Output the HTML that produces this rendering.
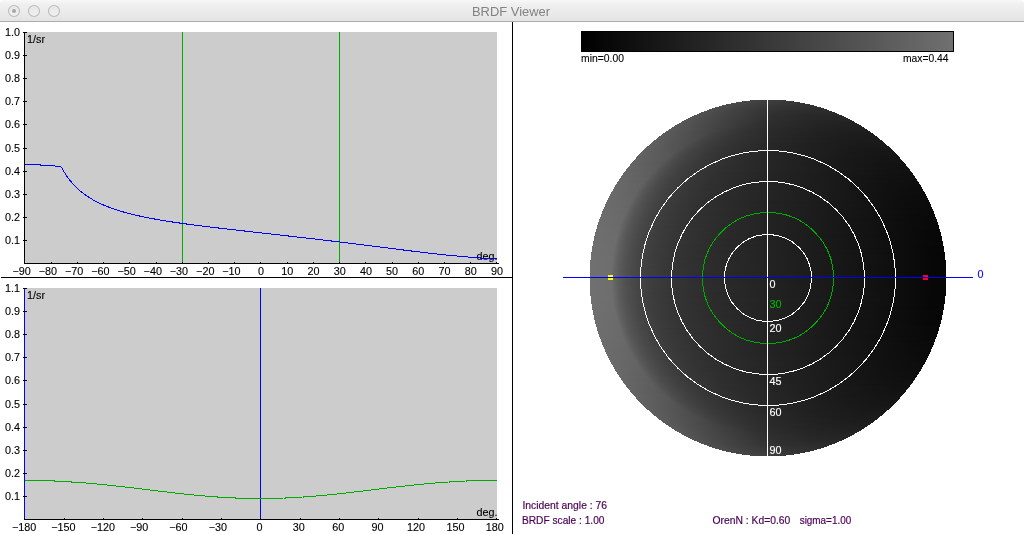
<!DOCTYPE html>
<html><head><meta charset="utf-8"><title>BRDF Viewer</title>
<style>html,body{margin:0;padding:0;background:#fff}body{width:1024px;height:534px;overflow:hidden;position:relative}svg{position:absolute;left:0;top:0;display:block;will-change:transform}text{font-family:"Liberation Sans",sans-serif}</style></head><body>
<svg width="1024" height="534" viewBox="0 0 1024 534">
<defs>
<linearGradient id="tb" x1="0" y1="0" x2="0" y2="1"><stop offset="0" stop-color="#f8f8f8"/><stop offset="0.2" stop-color="#f0f0f0"/><stop offset="1" stop-color="#e4e4e4"/></linearGradient>
<linearGradient id="bt" x1="0" y1="0" x2="0" y2="1"><stop offset="0" stop-color="#e6e6e6"/><stop offset="1" stop-color="#f2f2f2"/></linearGradient>
<linearGradient id="cb" x1="0" y1="0" x2="1" y2="0"><stop offset="0" stop-color="#000"/><stop offset="1" stop-color="#707070"/></linearGradient>
<linearGradient id="g0" gradientUnits="userSpaceOnUse" x1="590" y1="0" x2="946" y2="0"><stop offset="0.4256" stop-color="#484848"/><stop offset="0.4902" stop-color="#3f3f3f"/><stop offset="0.5548" stop-color="#393939"/><stop offset="0.5744" stop-color="#393939"/></linearGradient>
<linearGradient id="g1" gradientUnits="userSpaceOnUse" x1="590" y1="0" x2="946" y2="0"><stop offset="0.3919" stop-color="#4c4c4c"/><stop offset="0.4621" stop-color="#404040"/><stop offset="0.5295" stop-color="#393939"/><stop offset="0.5941" stop-color="#353535"/><stop offset="0.6081" stop-color="#353535"/></linearGradient>
<linearGradient id="g2" gradientUnits="userSpaceOnUse" x1="590" y1="0" x2="946" y2="0"><stop offset="0.3694" stop-color="#4e4e4e"/><stop offset="0.4396" stop-color="#414141"/><stop offset="0.5098" stop-color="#383838"/><stop offset="0.5829" stop-color="#333333"/><stop offset="0.6306" stop-color="#323232"/></linearGradient>
<linearGradient id="g3" gradientUnits="userSpaceOnUse" x1="590" y1="0" x2="946" y2="0"><stop offset="0.3497" stop-color="#505050"/><stop offset="0.4228" stop-color="#424242"/><stop offset="0.5014" stop-color="#373737"/><stop offset="0.5801" stop-color="#313131"/><stop offset="0.6419" stop-color="#303030"/><stop offset="0.6503" stop-color="#303030"/></linearGradient>
<linearGradient id="g4" gradientUnits="userSpaceOnUse" x1="590" y1="0" x2="946" y2="0"><stop offset="0.3329" stop-color="#515151"/><stop offset="0.4059" stop-color="#434343"/><stop offset="0.4958" stop-color="#363636"/><stop offset="0.5744" stop-color="#303030"/><stop offset="0.6419" stop-color="#2d2d2d"/><stop offset="0.6671" stop-color="#2e2e2e"/></linearGradient>
<linearGradient id="g5" gradientUnits="userSpaceOnUse" x1="590" y1="0" x2="946" y2="0"><stop offset="0.316" stop-color="#535353"/><stop offset="0.3862" stop-color="#454545"/><stop offset="0.4874" stop-color="#353535"/><stop offset="0.552" stop-color="#2f2f2f"/><stop offset="0.6334" stop-color="#2c2c2c"/><stop offset="0.684" stop-color="#2c2c2c"/></linearGradient>
<linearGradient id="g6" gradientUnits="userSpaceOnUse" x1="590" y1="0" x2="946" y2="0"><stop offset="0.302" stop-color="#545454"/><stop offset="0.3722" stop-color="#464646"/><stop offset="0.4817" stop-color="#353535"/><stop offset="0.5267" stop-color="#303030"/><stop offset="0.6166" stop-color="#2b2b2b"/><stop offset="0.6812" stop-color="#2a2a2a"/><stop offset="0.698" stop-color="#2a2a2a"/></linearGradient>
<linearGradient id="g7" gradientUnits="userSpaceOnUse" x1="590" y1="0" x2="946" y2="0"><stop offset="0.2907" stop-color="#555555"/><stop offset="0.3638" stop-color="#474747"/><stop offset="0.4817" stop-color="#343434"/><stop offset="0.5211" stop-color="#2f2f2f"/><stop offset="0.6194" stop-color="#292929"/><stop offset="0.6868" stop-color="#282828"/><stop offset="0.7093" stop-color="#292929"/></linearGradient>
<linearGradient id="g8" gradientUnits="userSpaceOnUse" x1="590" y1="0" x2="946" y2="0"><stop offset="0.2795" stop-color="#565656"/><stop offset="0.3553" stop-color="#474747"/><stop offset="0.4846" stop-color="#323232"/><stop offset="0.5239" stop-color="#2e2e2e"/><stop offset="0.625" stop-color="#282828"/><stop offset="0.6952" stop-color="#262626"/><stop offset="0.7205" stop-color="#272727"/></linearGradient>
<linearGradient id="g9" gradientUnits="userSpaceOnUse" x1="590" y1="0" x2="946" y2="0"><stop offset="0.2683" stop-color="#575757"/><stop offset="0.3441" stop-color="#484848"/><stop offset="0.4846" stop-color="#313131"/><stop offset="0.5183" stop-color="#2e2e2e"/><stop offset="0.6278" stop-color="#272727"/><stop offset="0.7008" stop-color="#252525"/><stop offset="0.7317" stop-color="#262626"/></linearGradient>
<linearGradient id="g10" gradientUnits="userSpaceOnUse" x1="590" y1="0" x2="946" y2="0"><stop offset="0.257" stop-color="#585858"/><stop offset="0.3329" stop-color="#494949"/><stop offset="0.4874" stop-color="#303030"/><stop offset="0.5211" stop-color="#2d2d2d"/><stop offset="0.6362" stop-color="#252525"/><stop offset="0.7093" stop-color="#242424"/><stop offset="0.743" stop-color="#252525"/></linearGradient>
<linearGradient id="g11" gradientUnits="userSpaceOnUse" x1="590" y1="0" x2="946" y2="0"><stop offset="0.2458" stop-color="#595959"/><stop offset="0.3188" stop-color="#4b4b4b"/><stop offset="0.4874" stop-color="#2f2f2f"/><stop offset="0.5295" stop-color="#2b2b2b"/><stop offset="0.6475" stop-color="#242424"/><stop offset="0.7205" stop-color="#222222"/><stop offset="0.7542" stop-color="#242424"/></linearGradient>
<linearGradient id="g12" gradientUnits="userSpaceOnUse" x1="590" y1="0" x2="946" y2="0"><stop offset="0.2374" stop-color="#5a5a5a"/><stop offset="0.316" stop-color="#4b4b4b"/><stop offset="0.4649" stop-color="#313131"/><stop offset="0.5126" stop-color="#2c2c2c"/><stop offset="0.639" stop-color="#242424"/><stop offset="0.7205" stop-color="#212121"/><stop offset="0.7626" stop-color="#232323"/></linearGradient>
<linearGradient id="g13" gradientUnits="userSpaceOnUse" x1="590" y1="0" x2="946" y2="0"><stop offset="0.2289" stop-color="#5b5b5b"/><stop offset="0.3104" stop-color="#4b4b4b"/><stop offset="0.389" stop-color="#3e3e3e"/><stop offset="0.4396" stop-color="#343434"/><stop offset="0.507" stop-color="#2c2c2c"/><stop offset="0.639" stop-color="#232323"/><stop offset="0.7233" stop-color="#202020"/><stop offset="0.7711" stop-color="#212121"/></linearGradient>
<linearGradient id="g14" gradientUnits="userSpaceOnUse" x1="590" y1="0" x2="946" y2="0"><stop offset="0.2205" stop-color="#5c5c5c"/><stop offset="0.3048" stop-color="#4c4c4c"/><stop offset="0.3694" stop-color="#404040"/><stop offset="0.4143" stop-color="#373737"/><stop offset="0.4874" stop-color="#2d2d2d"/><stop offset="0.5829" stop-color="#252525"/><stop offset="0.7037" stop-color="#202020"/><stop offset="0.7626" stop-color="#202020"/><stop offset="0.7795" stop-color="#202020"/></linearGradient>
<linearGradient id="g15" gradientUnits="userSpaceOnUse" x1="590" y1="0" x2="946" y2="0"><stop offset="0.2121" stop-color="#5c5c5c"/><stop offset="0.2992" stop-color="#4c4c4c"/><stop offset="0.3497" stop-color="#444444"/><stop offset="0.389" stop-color="#3a3a3a"/><stop offset="0.448" stop-color="#313131"/><stop offset="0.5154" stop-color="#2a2a2a"/><stop offset="0.6559" stop-color="#212121"/><stop offset="0.743" stop-color="#1e1e1e"/><stop offset="0.7879" stop-color="#1f1f1f"/></linearGradient>
<linearGradient id="g16" gradientUnits="userSpaceOnUse" x1="590" y1="0" x2="946" y2="0"><stop offset="0.2037" stop-color="#5d5d5d"/><stop offset="0.2935" stop-color="#4d4d4d"/><stop offset="0.3357" stop-color="#454545"/><stop offset="0.3722" stop-color="#3c3c3c"/><stop offset="0.4256" stop-color="#333333"/><stop offset="0.507" stop-color="#2a2a2a"/><stop offset="0.6531" stop-color="#202020"/><stop offset="0.7458" stop-color="#1d1d1d"/><stop offset="0.7935" stop-color="#1e1e1e"/><stop offset="0.7963" stop-color="#1f1f1f"/></linearGradient>
<linearGradient id="g17" gradientUnits="userSpaceOnUse" x1="590" y1="0" x2="946" y2="0"><stop offset="0.1952" stop-color="#5e5e5e"/><stop offset="0.2851" stop-color="#4e4e4e"/><stop offset="0.3216" stop-color="#484848"/><stop offset="0.3553" stop-color="#3e3e3e"/><stop offset="0.4059" stop-color="#353535"/><stop offset="0.4902" stop-color="#2b2b2b"/><stop offset="0.6278" stop-color="#212121"/><stop offset="0.743" stop-color="#1c1c1c"/><stop offset="0.7963" stop-color="#1d1d1d"/><stop offset="0.8048" stop-color="#1e1e1e"/></linearGradient>
<linearGradient id="g18" gradientUnits="userSpaceOnUse" x1="590" y1="0" x2="946" y2="0"><stop offset="0.1896" stop-color="#5e5e5e"/><stop offset="0.302" stop-color="#4b4b4b"/><stop offset="0.3104" stop-color="#494949"/><stop offset="0.3413" stop-color="#404040"/><stop offset="0.3862" stop-color="#373737"/><stop offset="0.4593" stop-color="#2e2e2e"/><stop offset="0.5379" stop-color="#272727"/><stop offset="0.6896" stop-color="#1e1e1e"/><stop offset="0.7711" stop-color="#1b1b1b"/><stop offset="0.8104" stop-color="#1d1d1d"/></linearGradient>
<linearGradient id="g19" gradientUnits="userSpaceOnUse" x1="590" y1="0" x2="946" y2="0"><stop offset="0.1812" stop-color="#5f5f5f"/><stop offset="0.2963" stop-color="#4c4c4c"/><stop offset="0.3272" stop-color="#424242"/><stop offset="0.3694" stop-color="#393939"/><stop offset="0.434" stop-color="#303030"/><stop offset="0.5239" stop-color="#272727"/><stop offset="0.6868" stop-color="#1d1d1d"/><stop offset="0.7739" stop-color="#1b1b1b"/><stop offset="0.8188" stop-color="#1c1c1c"/></linearGradient>
<linearGradient id="g20" gradientUnits="userSpaceOnUse" x1="590" y1="0" x2="946" y2="0"><stop offset="0.1756" stop-color="#606060"/><stop offset="0.2879" stop-color="#4c4c4c"/><stop offset="0.316" stop-color="#434343"/><stop offset="0.3553" stop-color="#3a3a3a"/><stop offset="0.4171" stop-color="#313131"/><stop offset="0.5154" stop-color="#282828"/><stop offset="0.6868" stop-color="#1d1d1d"/><stop offset="0.7795" stop-color="#1a1a1a"/><stop offset="0.8244" stop-color="#1b1b1b"/></linearGradient>
<linearGradient id="g21" gradientUnits="userSpaceOnUse" x1="590" y1="0" x2="946" y2="0"><stop offset="0.1671" stop-color="#616161"/><stop offset="0.2767" stop-color="#4e4e4e"/><stop offset="0.302" stop-color="#454545"/><stop offset="0.3385" stop-color="#3c3c3c"/><stop offset="0.3947" stop-color="#333333"/><stop offset="0.4874" stop-color="#292929"/><stop offset="0.6559" stop-color="#1e1e1e"/><stop offset="0.7767" stop-color="#191919"/><stop offset="0.8272" stop-color="#1a1a1a"/><stop offset="0.8329" stop-color="#1a1a1a"/></linearGradient>
<linearGradient id="g22" gradientUnits="userSpaceOnUse" x1="590" y1="0" x2="946" y2="0"><stop offset="0.1615" stop-color="#616161"/><stop offset="0.2683" stop-color="#4f4f4f"/><stop offset="0.2935" stop-color="#464646"/><stop offset="0.3301" stop-color="#3d3d3d"/><stop offset="0.3834" stop-color="#343434"/><stop offset="0.4733" stop-color="#2a2a2a"/><stop offset="0.6306" stop-color="#1f1f1f"/><stop offset="0.7654" stop-color="#191919"/><stop offset="0.8216" stop-color="#191919"/><stop offset="0.8385" stop-color="#1a1a1a"/></linearGradient>
<linearGradient id="g23" gradientUnits="userSpaceOnUse" x1="590" y1="0" x2="946" y2="0"><stop offset="0.1559" stop-color="#626262"/><stop offset="0.2598" stop-color="#505050"/><stop offset="0.2851" stop-color="#474747"/><stop offset="0.3188" stop-color="#3e3e3e"/><stop offset="0.3694" stop-color="#353535"/><stop offset="0.4508" stop-color="#2c2c2c"/><stop offset="0.5772" stop-color="#222222"/><stop offset="0.7402" stop-color="#191919"/><stop offset="0.8132" stop-color="#181818"/><stop offset="0.8441" stop-color="#191919"/></linearGradient>
<linearGradient id="g24" gradientUnits="userSpaceOnUse" x1="590" y1="0" x2="946" y2="0"><stop offset="0.1503" stop-color="#626262"/><stop offset="0.2514" stop-color="#525252"/><stop offset="0.2739" stop-color="#484848"/><stop offset="0.3076" stop-color="#3f3f3f"/><stop offset="0.3553" stop-color="#363636"/><stop offset="0.4312" stop-color="#2d2d2d"/><stop offset="0.5548" stop-color="#242424"/><stop offset="0.7374" stop-color="#191919"/><stop offset="0.816" stop-color="#171717"/><stop offset="0.8497" stop-color="#181818"/></linearGradient>
<linearGradient id="g25" gradientUnits="userSpaceOnUse" x1="590" y1="0" x2="946" y2="0"><stop offset="0.1447" stop-color="#636363"/><stop offset="0.243" stop-color="#535353"/><stop offset="0.2654" stop-color="#494949"/><stop offset="0.2963" stop-color="#404040"/><stop offset="0.3413" stop-color="#383838"/><stop offset="0.4115" stop-color="#2f2f2f"/><stop offset="0.5351" stop-color="#252525"/><stop offset="0.7346" stop-color="#191919"/><stop offset="0.8188" stop-color="#161616"/><stop offset="0.8553" stop-color="#171717"/></linearGradient>
<linearGradient id="g26" gradientUnits="userSpaceOnUse" x1="590" y1="0" x2="946" y2="0"><stop offset="0.139" stop-color="#636363"/><stop offset="0.2346" stop-color="#555555"/><stop offset="0.257" stop-color="#4a4a4a"/><stop offset="0.2879" stop-color="#414141"/><stop offset="0.3329" stop-color="#383838"/><stop offset="0.4031" stop-color="#2f2f2f"/><stop offset="0.5267" stop-color="#252525"/><stop offset="0.7374" stop-color="#181818"/><stop offset="0.8244" stop-color="#161616"/><stop offset="0.861" stop-color="#171717"/></linearGradient>
<linearGradient id="g27" gradientUnits="userSpaceOnUse" x1="590" y1="0" x2="946" y2="0"><stop offset="0.1334" stop-color="#646464"/><stop offset="0.2261" stop-color="#565656"/><stop offset="0.2514" stop-color="#4a4a4a"/><stop offset="0.2823" stop-color="#414141"/><stop offset="0.3272" stop-color="#383838"/><stop offset="0.3947" stop-color="#303030"/><stop offset="0.5183" stop-color="#252525"/><stop offset="0.7402" stop-color="#181818"/><stop offset="0.8301" stop-color="#151515"/><stop offset="0.8666" stop-color="#161616"/></linearGradient>
<linearGradient id="g28" gradientUnits="userSpaceOnUse" x1="590" y1="0" x2="946" y2="0"><stop offset="0.1278" stop-color="#646464"/><stop offset="0.2205" stop-color="#575757"/><stop offset="0.2402" stop-color="#4d4d4d"/><stop offset="0.2683" stop-color="#434343"/><stop offset="0.3076" stop-color="#3b3b3b"/><stop offset="0.3666" stop-color="#323232"/><stop offset="0.4677" stop-color="#292929"/><stop offset="0.6952" stop-color="#1a1a1a"/><stop offset="0.8188" stop-color="#151515"/><stop offset="0.8666" stop-color="#151515"/><stop offset="0.8722" stop-color="#161616"/></linearGradient>
<linearGradient id="g29" gradientUnits="userSpaceOnUse" x1="590" y1="0" x2="946" y2="0"><stop offset="0.1222" stop-color="#656565"/><stop offset="0.2121" stop-color="#585858"/><stop offset="0.2374" stop-color="#4c4c4c"/><stop offset="0.2654" stop-color="#434343"/><stop offset="0.3076" stop-color="#3a3a3a"/><stop offset="0.3694" stop-color="#313131"/><stop offset="0.4789" stop-color="#282828"/><stop offset="0.7233" stop-color="#181818"/><stop offset="0.8357" stop-color="#141414"/><stop offset="0.8778" stop-color="#151515"/></linearGradient>
<linearGradient id="g30" gradientUnits="userSpaceOnUse" x1="590" y1="0" x2="946" y2="0"><stop offset="0.1166" stop-color="#656565"/><stop offset="0.2065" stop-color="#595959"/><stop offset="0.2289" stop-color="#4d4d4d"/><stop offset="0.257" stop-color="#444444"/><stop offset="0.2963" stop-color="#3b3b3b"/><stop offset="0.3553" stop-color="#323232"/><stop offset="0.4565" stop-color="#292929"/><stop offset="0.7037" stop-color="#191919"/><stop offset="0.8301" stop-color="#141414"/><stop offset="0.8778" stop-color="#141414"/><stop offset="0.8834" stop-color="#151515"/></linearGradient>
<linearGradient id="g31" gradientUnits="userSpaceOnUse" x1="590" y1="0" x2="946" y2="0"><stop offset="0.1138" stop-color="#656565"/><stop offset="0.2008" stop-color="#595959"/><stop offset="0.2205" stop-color="#4f4f4f"/><stop offset="0.2458" stop-color="#464646"/><stop offset="0.2823" stop-color="#3d3d3d"/><stop offset="0.3357" stop-color="#343434"/><stop offset="0.4228" stop-color="#2c2c2c"/><stop offset="0.6362" stop-color="#1d1d1d"/><stop offset="0.8048" stop-color="#141414"/><stop offset="0.8666" stop-color="#131313"/><stop offset="0.8862" stop-color="#141414"/></linearGradient>
<linearGradient id="g32" gradientUnits="userSpaceOnUse" x1="590" y1="0" x2="946" y2="0"><stop offset="0.1081" stop-color="#666666"/><stop offset="0.1952" stop-color="#5a5a5a"/><stop offset="0.2121" stop-color="#515151"/><stop offset="0.2374" stop-color="#474747"/><stop offset="0.2711" stop-color="#3e3e3e"/><stop offset="0.3216" stop-color="#363636"/><stop offset="0.4031" stop-color="#2d2d2d"/><stop offset="0.5857" stop-color="#202020"/><stop offset="0.7963" stop-color="#141414"/><stop offset="0.8666" stop-color="#121212"/><stop offset="0.8919" stop-color="#131313"/></linearGradient>
<linearGradient id="g33" gradientUnits="userSpaceOnUse" x1="590" y1="0" x2="946" y2="0"><stop offset="0.1025" stop-color="#676767"/><stop offset="0.1896" stop-color="#5b5b5b"/><stop offset="0.2065" stop-color="#515151"/><stop offset="0.2289" stop-color="#484848"/><stop offset="0.2626" stop-color="#3f3f3f"/><stop offset="0.3104" stop-color="#373737"/><stop offset="0.3862" stop-color="#2e2e2e"/><stop offset="0.5435" stop-color="#232323"/><stop offset="0.7935" stop-color="#141414"/><stop offset="0.8694" stop-color="#121212"/><stop offset="0.8975" stop-color="#131313"/></linearGradient>
<linearGradient id="g34" gradientUnits="userSpaceOnUse" x1="590" y1="0" x2="946" y2="0"><stop offset="0.09972" stop-color="#676767"/><stop offset="0.184" stop-color="#5c5c5c"/><stop offset="0.2008" stop-color="#525252"/><stop offset="0.2233" stop-color="#494949"/><stop offset="0.257" stop-color="#3f3f3f"/><stop offset="0.3048" stop-color="#373737"/><stop offset="0.3806" stop-color="#2e2e2e"/><stop offset="0.5351" stop-color="#232323"/><stop offset="0.7992" stop-color="#141414"/><stop offset="0.875" stop-color="#111111"/><stop offset="0.9003" stop-color="#121212"/></linearGradient>
<linearGradient id="g35" gradientUnits="userSpaceOnUse" x1="590" y1="0" x2="946" y2="0"><stop offset="0.0941" stop-color="#676767"/><stop offset="0.1784" stop-color="#5d5d5d"/><stop offset="0.1952" stop-color="#535353"/><stop offset="0.2177" stop-color="#494949"/><stop offset="0.2486" stop-color="#404040"/><stop offset="0.2935" stop-color="#383838"/><stop offset="0.3638" stop-color="#303030"/><stop offset="0.493" stop-color="#262626"/><stop offset="0.7963" stop-color="#131313"/><stop offset="0.8778" stop-color="#111111"/><stop offset="0.9059" stop-color="#121212"/></linearGradient>
<linearGradient id="g36" gradientUnits="userSpaceOnUse" x1="590" y1="0" x2="946" y2="0"><stop offset="0.09129" stop-color="#686868"/><stop offset="0.1728" stop-color="#5e5e5e"/><stop offset="0.1924" stop-color="#525252"/><stop offset="0.2149" stop-color="#494949"/><stop offset="0.2486" stop-color="#3f3f3f"/><stop offset="0.2963" stop-color="#373737"/><stop offset="0.3722" stop-color="#2e2e2e"/><stop offset="0.5239" stop-color="#232323"/><stop offset="0.8104" stop-color="#131313"/><stop offset="0.8834" stop-color="#111111"/><stop offset="0.9087" stop-color="#111111"/></linearGradient>
<linearGradient id="g37" gradientUnits="userSpaceOnUse" x1="590" y1="0" x2="946" y2="0"><stop offset="0.08567" stop-color="#686868"/><stop offset="0.1671" stop-color="#5e5e5e"/><stop offset="0.1896" stop-color="#515151"/><stop offset="0.2121" stop-color="#484848"/><stop offset="0.2458" stop-color="#3f3f3f"/><stop offset="0.2935" stop-color="#373737"/><stop offset="0.3694" stop-color="#2e2e2e"/><stop offset="0.5239" stop-color="#232323"/><stop offset="0.8188" stop-color="#121212"/><stop offset="0.889" stop-color="#101010"/><stop offset="0.9143" stop-color="#111111"/></linearGradient>
<linearGradient id="g38" gradientUnits="userSpaceOnUse" x1="590" y1="0" x2="946" y2="0"><stop offset="0.08287" stop-color="#686868"/><stop offset="0.1615" stop-color="#5f5f5f"/><stop offset="0.1643" stop-color="#5e5e5e"/><stop offset="0.1812" stop-color="#545454"/><stop offset="0.2037" stop-color="#4a4a4a"/><stop offset="0.2346" stop-color="#414141"/><stop offset="0.2795" stop-color="#383838"/><stop offset="0.3497" stop-color="#303030"/><stop offset="0.4761" stop-color="#262626"/><stop offset="0.8188" stop-color="#121212"/><stop offset="0.8947" stop-color="#101010"/><stop offset="0.9171" stop-color="#101010"/></linearGradient>
<linearGradient id="g39" gradientUnits="userSpaceOnUse" x1="590" y1="0" x2="946" y2="0"><stop offset="0.08006" stop-color="#696969"/><stop offset="0.1587" stop-color="#606060"/><stop offset="0.1756" stop-color="#555555"/><stop offset="0.198" stop-color="#4b4b4b"/><stop offset="0.2289" stop-color="#414141"/><stop offset="0.2739" stop-color="#393939"/><stop offset="0.3441" stop-color="#303030"/><stop offset="0.4705" stop-color="#262626"/><stop offset="0.8244" stop-color="#111111"/><stop offset="0.8975" stop-color="#0f0f0f"/><stop offset="0.9199" stop-color="#101010"/></linearGradient>
<linearGradient id="g40" gradientUnits="userSpaceOnUse" x1="590" y1="0" x2="946" y2="0"><stop offset="0.07444" stop-color="#696969"/><stop offset="0.1531" stop-color="#606060"/><stop offset="0.1756" stop-color="#535353"/><stop offset="0.198" stop-color="#494949"/><stop offset="0.2289" stop-color="#404040"/><stop offset="0.2739" stop-color="#383838"/><stop offset="0.3441" stop-color="#303030"/><stop offset="0.4733" stop-color="#262626"/><stop offset="0.8329" stop-color="#111111"/><stop offset="0.9031" stop-color="#0f0f0f"/><stop offset="0.9256" stop-color="#0f0f0f"/></linearGradient>
<linearGradient id="g41" gradientUnits="userSpaceOnUse" x1="590" y1="0" x2="946" y2="0"><stop offset="0.07163" stop-color="#696969"/><stop offset="0.1503" stop-color="#616161"/><stop offset="0.1643" stop-color="#575757"/><stop offset="0.184" stop-color="#4d4d4d"/><stop offset="0.2121" stop-color="#444444"/><stop offset="0.2514" stop-color="#3b3b3b"/><stop offset="0.3104" stop-color="#333333"/><stop offset="0.4115" stop-color="#2a2a2a"/><stop offset="0.8272" stop-color="#111111"/><stop offset="0.9059" stop-color="#0e0e0e"/><stop offset="0.9284" stop-color="#0f0f0f"/></linearGradient>
<linearGradient id="g42" gradientUnits="userSpaceOnUse" x1="590" y1="0" x2="946" y2="0"><stop offset="0.06882" stop-color="#6a6a6a"/><stop offset="0.1447" stop-color="#626262"/><stop offset="0.1643" stop-color="#555555"/><stop offset="0.1868" stop-color="#4b4b4b"/><stop offset="0.2177" stop-color="#414141"/><stop offset="0.2626" stop-color="#393939"/><stop offset="0.3329" stop-color="#303030"/><stop offset="0.4565" stop-color="#272727"/><stop offset="0.8441" stop-color="#101010"/><stop offset="0.9115" stop-color="#0e0e0e"/><stop offset="0.9312" stop-color="#0f0f0f"/></linearGradient>
<linearGradient id="g43" gradientUnits="userSpaceOnUse" x1="590" y1="0" x2="946" y2="0"><stop offset="0.06601" stop-color="#6a6a6a"/><stop offset="0.1419" stop-color="#626262"/><stop offset="0.1559" stop-color="#585858"/><stop offset="0.1756" stop-color="#4e4e4e"/><stop offset="0.2037" stop-color="#444444"/><stop offset="0.243" stop-color="#3c3c3c"/><stop offset="0.302" stop-color="#333333"/><stop offset="0.4003" stop-color="#2b2b2b"/><stop offset="0.8441" stop-color="#101010"/><stop offset="0.9143" stop-color="#0e0e0e"/><stop offset="0.934" stop-color="#0e0e0e"/></linearGradient>
<linearGradient id="g44" gradientUnits="userSpaceOnUse" x1="590" y1="0" x2="946" y2="0"><stop offset="0.0632" stop-color="#6a6a6a"/><stop offset="0.1362" stop-color="#636363"/><stop offset="0.1419" stop-color="#5f5f5f"/><stop offset="0.1587" stop-color="#545454"/><stop offset="0.1812" stop-color="#4a4a4a"/><stop offset="0.2121" stop-color="#414141"/><stop offset="0.257" stop-color="#393939"/><stop offset="0.3272" stop-color="#303030"/><stop offset="0.4537" stop-color="#272727"/><stop offset="0.8553" stop-color="#0f0f0f"/><stop offset="0.9199" stop-color="#0d0d0d"/><stop offset="0.9368" stop-color="#0e0e0e"/></linearGradient>
<linearGradient id="g45" gradientUnits="userSpaceOnUse" x1="590" y1="0" x2="946" y2="0"><stop offset="0.05758" stop-color="#6b6b6b"/><stop offset="0.1334" stop-color="#636363"/><stop offset="0.1503" stop-color="#575757"/><stop offset="0.1699" stop-color="#4e4e4e"/><stop offset="0.198" stop-color="#444444"/><stop offset="0.2374" stop-color="#3c3c3c"/><stop offset="0.2963" stop-color="#333333"/><stop offset="0.3975" stop-color="#2b2b2b"/><stop offset="0.8581" stop-color="#0f0f0f"/><stop offset="0.9228" stop-color="#0d0d0d"/><stop offset="0.9424" stop-color="#0d0d0d"/></linearGradient>
<linearGradient id="g46" gradientUnits="userSpaceOnUse" x1="590" y1="0" x2="946" y2="0"><stop offset="0.05478" stop-color="#6b6b6b"/><stop offset="0.1306" stop-color="#636363"/><stop offset="0.1447" stop-color="#595959"/><stop offset="0.1643" stop-color="#4f4f4f"/><stop offset="0.1896" stop-color="#464646"/><stop offset="0.2261" stop-color="#3d3d3d"/><stop offset="0.2823" stop-color="#353535"/><stop offset="0.375" stop-color="#2c2c2c"/><stop offset="0.8385" stop-color="#101010"/><stop offset="0.9228" stop-color="#0d0d0d"/><stop offset="0.9452" stop-color="#0d0d0d"/></linearGradient>
<linearGradient id="g47" gradientUnits="userSpaceOnUse" x1="590" y1="0" x2="946" y2="0"><stop offset="0.05197" stop-color="#6b6b6b"/><stop offset="0.125" stop-color="#646464"/><stop offset="0.1278" stop-color="#636363"/><stop offset="0.1419" stop-color="#595959"/><stop offset="0.1615" stop-color="#4f4f4f"/><stop offset="0.1868" stop-color="#464646"/><stop offset="0.2233" stop-color="#3d3d3d"/><stop offset="0.2795" stop-color="#353535"/><stop offset="0.3722" stop-color="#2c2c2c"/><stop offset="0.8497" stop-color="#0f0f0f"/><stop offset="0.9284" stop-color="#0c0c0c"/><stop offset="0.948" stop-color="#0d0d0d"/></linearGradient>
<linearGradient id="g48" gradientUnits="userSpaceOnUse" x1="590" y1="0" x2="946" y2="0"><stop offset="0.04916" stop-color="#6b6b6b"/><stop offset="0.1222" stop-color="#656565"/><stop offset="0.1419" stop-color="#575757"/><stop offset="0.1615" stop-color="#4d4d4d"/><stop offset="0.1896" stop-color="#444444"/><stop offset="0.2289" stop-color="#3c3c3c"/><stop offset="0.2879" stop-color="#333333"/><stop offset="0.389" stop-color="#2b2b2b"/><stop offset="0.8722" stop-color="#0e0e0e"/><stop offset="0.934" stop-color="#0c0c0c"/><stop offset="0.9508" stop-color="#0c0c0c"/></linearGradient>
<linearGradient id="g49" gradientUnits="userSpaceOnUse" x1="590" y1="0" x2="946" y2="0"><stop offset="0.04635" stop-color="#6c6c6c"/><stop offset="0.1194" stop-color="#656565"/><stop offset="0.1362" stop-color="#595959"/><stop offset="0.1559" stop-color="#4f4f4f"/><stop offset="0.1812" stop-color="#464646"/><stop offset="0.2177" stop-color="#3d3d3d"/><stop offset="0.2739" stop-color="#353535"/><stop offset="0.3666" stop-color="#2c2c2c"/><stop offset="0.8666" stop-color="#0e0e0e"/><stop offset="0.9368" stop-color="#0c0c0c"/><stop offset="0.9537" stop-color="#0c0c0c"/></linearGradient>
<linearGradient id="g50" gradientUnits="userSpaceOnUse" x1="590" y1="0" x2="946" y2="0"><stop offset="0.04354" stop-color="#6c6c6c"/><stop offset="0.1166" stop-color="#666666"/><stop offset="0.1306" stop-color="#5b5b5b"/><stop offset="0.1475" stop-color="#515151"/><stop offset="0.1728" stop-color="#474747"/><stop offset="0.2065" stop-color="#3f3f3f"/><stop offset="0.257" stop-color="#373737"/><stop offset="0.3385" stop-color="#2e2e2e"/><stop offset="0.5042" stop-color="#232323"/><stop offset="0.8919" stop-color="#0d0d0d"/><stop offset="0.948" stop-color="#0b0b0b"/><stop offset="0.9565" stop-color="#0c0c0c"/></linearGradient>
<linearGradient id="g51" gradientUnits="userSpaceOnUse" x1="590" y1="0" x2="946" y2="0"><stop offset="0.04073" stop-color="#6c6c6c"/><stop offset="0.1138" stop-color="#666666"/><stop offset="0.1278" stop-color="#5b5b5b"/><stop offset="0.1447" stop-color="#515151"/><stop offset="0.1671" stop-color="#484848"/><stop offset="0.2008" stop-color="#3f3f3f"/><stop offset="0.2514" stop-color="#373737"/><stop offset="0.3301" stop-color="#2f2f2f"/><stop offset="0.4846" stop-color="#242424"/><stop offset="0.8975" stop-color="#0c0c0c"/><stop offset="0.9537" stop-color="#0b0b0b"/><stop offset="0.9593" stop-color="#0b0b0b"/></linearGradient>
<linearGradient id="g52" gradientUnits="userSpaceOnUse" x1="590" y1="0" x2="946" y2="0"><stop offset="0.03792" stop-color="#6c6c6c"/><stop offset="0.1081" stop-color="#676767"/><stop offset="0.111" stop-color="#666666"/><stop offset="0.125" stop-color="#5b5b5b"/><stop offset="0.1419" stop-color="#515151"/><stop offset="0.1643" stop-color="#484848"/><stop offset="0.198" stop-color="#404040"/><stop offset="0.2486" stop-color="#373737"/><stop offset="0.3272" stop-color="#2f2f2f"/><stop offset="0.4817" stop-color="#252525"/><stop offset="0.9031" stop-color="#0c0c0c"/><stop offset="0.9565" stop-color="#0b0b0b"/><stop offset="0.9621" stop-color="#0b0b0b"/></linearGradient>
<linearGradient id="g53" gradientUnits="userSpaceOnUse" x1="590" y1="0" x2="946" y2="0"><stop offset="0.03792" stop-color="#6c6c6c"/><stop offset="0.1053" stop-color="#676767"/><stop offset="0.1081" stop-color="#666666"/><stop offset="0.1222" stop-color="#5b5b5b"/><stop offset="0.139" stop-color="#525252"/><stop offset="0.1615" stop-color="#494949"/><stop offset="0.1952" stop-color="#404040"/><stop offset="0.243" stop-color="#373737"/><stop offset="0.3216" stop-color="#2f2f2f"/><stop offset="0.4733" stop-color="#252525"/><stop offset="0.9059" stop-color="#0c0c0c"/><stop offset="0.9593" stop-color="#0b0b0b"/><stop offset="0.9621" stop-color="#0b0b0b"/></linearGradient>
<linearGradient id="g54" gradientUnits="userSpaceOnUse" x1="590" y1="0" x2="946" y2="0"><stop offset="0.03511" stop-color="#6d6d6d"/><stop offset="0.1025" stop-color="#686868"/><stop offset="0.1053" stop-color="#676767"/><stop offset="0.1194" stop-color="#5b5b5b"/><stop offset="0.1362" stop-color="#525252"/><stop offset="0.1587" stop-color="#494949"/><stop offset="0.1924" stop-color="#404040"/><stop offset="0.2402" stop-color="#383838"/><stop offset="0.316" stop-color="#303030"/><stop offset="0.4621" stop-color="#262626"/><stop offset="0.9115" stop-color="#0b0b0b"/><stop offset="0.9649" stop-color="#0a0a0a"/></linearGradient>
<linearGradient id="g55" gradientUnits="userSpaceOnUse" x1="590" y1="0" x2="946" y2="0"><stop offset="0.0323" stop-color="#6d6d6d"/><stop offset="0.09972" stop-color="#686868"/><stop offset="0.1025" stop-color="#676767"/><stop offset="0.1166" stop-color="#5c5c5c"/><stop offset="0.1334" stop-color="#525252"/><stop offset="0.1559" stop-color="#494949"/><stop offset="0.1896" stop-color="#404040"/><stop offset="0.2374" stop-color="#383838"/><stop offset="0.3132" stop-color="#303030"/><stop offset="0.4593" stop-color="#262626"/><stop offset="0.9171" stop-color="#0b0b0b"/><stop offset="0.9677" stop-color="#0a0a0a"/></linearGradient>
<linearGradient id="g56" gradientUnits="userSpaceOnUse" x1="590" y1="0" x2="946" y2="0"><stop offset="0.02949" stop-color="#6d6d6d"/><stop offset="0.09691" stop-color="#686868"/><stop offset="0.09972" stop-color="#686868"/><stop offset="0.111" stop-color="#5e5e5e"/><stop offset="0.1278" stop-color="#545454"/><stop offset="0.1503" stop-color="#4a4a4a"/><stop offset="0.1812" stop-color="#414141"/><stop offset="0.2261" stop-color="#393939"/><stop offset="0.2963" stop-color="#313131"/><stop offset="0.4256" stop-color="#282828"/><stop offset="0.9199" stop-color="#0b0b0b"/><stop offset="0.9705" stop-color="#0a0a0a"/></linearGradient>
<linearGradient id="g57" gradientUnits="userSpaceOnUse" x1="590" y1="0" x2="946" y2="0"><stop offset="0.02669" stop-color="#6d6d6d"/><stop offset="0.09691" stop-color="#696969"/><stop offset="0.1081" stop-color="#5f5f5f"/><stop offset="0.125" stop-color="#545454"/><stop offset="0.1475" stop-color="#4a4a4a"/><stop offset="0.1784" stop-color="#414141"/><stop offset="0.2233" stop-color="#393939"/><stop offset="0.2935" stop-color="#313131"/><stop offset="0.4228" stop-color="#282828"/><stop offset="0.9228" stop-color="#0a0a0a"/><stop offset="0.9733" stop-color="#0a0a0a"/></linearGradient>
<linearGradient id="g58" gradientUnits="userSpaceOnUse" x1="590" y1="0" x2="946" y2="0"><stop offset="0.02669" stop-color="#6e6e6e"/><stop offset="0.0941" stop-color="#696969"/><stop offset="0.1081" stop-color="#5d5d5d"/><stop offset="0.125" stop-color="#535353"/><stop offset="0.1475" stop-color="#4a4a4a"/><stop offset="0.1784" stop-color="#414141"/><stop offset="0.2233" stop-color="#393939"/><stop offset="0.2963" stop-color="#313131"/><stop offset="0.4312" stop-color="#272727"/><stop offset="0.8441" stop-color="#0f0f0f"/><stop offset="0.9508" stop-color="#090909"/><stop offset="0.9733" stop-color="#090909"/></linearGradient>
<linearGradient id="g59" gradientUnits="userSpaceOnUse" x1="590" y1="0" x2="946" y2="0"><stop offset="0.02388" stop-color="#6e6e6e"/><stop offset="0.09129" stop-color="#696969"/><stop offset="0.1081" stop-color="#5c5c5c"/><stop offset="0.125" stop-color="#525252"/><stop offset="0.1475" stop-color="#494949"/><stop offset="0.1812" stop-color="#404040"/><stop offset="0.2289" stop-color="#383838"/><stop offset="0.3048" stop-color="#303030"/><stop offset="0.4537" stop-color="#262626"/><stop offset="0.8357" stop-color="#0f0f0f"/><stop offset="0.9508" stop-color="#090909"/><stop offset="0.9761" stop-color="#090909"/></linearGradient>
<linearGradient id="g60" gradientUnits="userSpaceOnUse" x1="590" y1="0" x2="946" y2="0"><stop offset="0.02107" stop-color="#6e6e6e"/><stop offset="0.08848" stop-color="#6a6a6a"/><stop offset="0.09129" stop-color="#686868"/><stop offset="0.1025" stop-color="#5e5e5e"/><stop offset="0.1194" stop-color="#545454"/><stop offset="0.1419" stop-color="#4a4a4a"/><stop offset="0.1728" stop-color="#414141"/><stop offset="0.2177" stop-color="#393939"/><stop offset="0.2879" stop-color="#313131"/><stop offset="0.4171" stop-color="#282828"/><stop offset="0.816" stop-color="#101010"/><stop offset="0.948" stop-color="#090909"/><stop offset="0.9789" stop-color="#090909"/></linearGradient>
<linearGradient id="g61" gradientUnits="userSpaceOnUse" x1="590" y1="0" x2="946" y2="0"><stop offset="0.02107" stop-color="#6e6e6e"/><stop offset="0.08567" stop-color="#6a6a6a"/><stop offset="0.08848" stop-color="#696969"/><stop offset="0.09972" stop-color="#5f5f5f"/><stop offset="0.1166" stop-color="#545454"/><stop offset="0.139" stop-color="#4b4b4b"/><stop offset="0.1699" stop-color="#424242"/><stop offset="0.2149" stop-color="#393939"/><stop offset="0.2851" stop-color="#313131"/><stop offset="0.4143" stop-color="#282828"/><stop offset="0.8104" stop-color="#111111"/><stop offset="0.948" stop-color="#090909"/><stop offset="0.9789" stop-color="#090909"/></linearGradient>
<linearGradient id="g62" gradientUnits="userSpaceOnUse" x1="590" y1="0" x2="946" y2="0"><stop offset="0.01826" stop-color="#6e6e6e"/><stop offset="0.08567" stop-color="#6a6a6a"/><stop offset="0.09691" stop-color="#606060"/><stop offset="0.111" stop-color="#565656"/><stop offset="0.1306" stop-color="#4d4d4d"/><stop offset="0.1587" stop-color="#444444"/><stop offset="0.198" stop-color="#3c3c3c"/><stop offset="0.2598" stop-color="#343434"/><stop offset="0.3666" stop-color="#2b2b2b"/><stop offset="0.8188" stop-color="#101010"/><stop offset="0.9508" stop-color="#090909"/><stop offset="0.9817" stop-color="#090909"/></linearGradient>
<linearGradient id="g63" gradientUnits="userSpaceOnUse" x1="590" y1="0" x2="946" y2="0"><stop offset="0.01545" stop-color="#6e6e6e"/><stop offset="0.08287" stop-color="#6b6b6b"/><stop offset="0.09972" stop-color="#5d5d5d"/><stop offset="0.1166" stop-color="#535353"/><stop offset="0.139" stop-color="#494949"/><stop offset="0.1699" stop-color="#414141"/><stop offset="0.2177" stop-color="#383838"/><stop offset="0.2935" stop-color="#303030"/><stop offset="0.4368" stop-color="#272727"/><stop offset="0.7992" stop-color="#111111"/><stop offset="0.948" stop-color="#090909"/><stop offset="0.9846" stop-color="#080808"/></linearGradient>
<linearGradient id="g64" gradientUnits="userSpaceOnUse" x1="590" y1="0" x2="946" y2="0"><stop offset="0.01545" stop-color="#6f6f6f"/><stop offset="0.08006" stop-color="#6b6b6b"/><stop offset="0.08287" stop-color="#6a6a6a"/><stop offset="0.0941" stop-color="#606060"/><stop offset="0.1081" stop-color="#565656"/><stop offset="0.1278" stop-color="#4d4d4d"/><stop offset="0.1559" stop-color="#444444"/><stop offset="0.1952" stop-color="#3c3c3c"/><stop offset="0.257" stop-color="#343434"/><stop offset="0.3638" stop-color="#2b2b2b"/><stop offset="0.8076" stop-color="#111111"/><stop offset="0.9508" stop-color="#090909"/><stop offset="0.9846" stop-color="#080808"/></linearGradient>
<linearGradient id="g65" gradientUnits="userSpaceOnUse" x1="590" y1="0" x2="946" y2="0"><stop offset="0.01264" stop-color="#6f6f6f"/><stop offset="0.08006" stop-color="#6b6b6b"/><stop offset="0.09129" stop-color="#606060"/><stop offset="0.1053" stop-color="#575757"/><stop offset="0.125" stop-color="#4d4d4d"/><stop offset="0.1531" stop-color="#444444"/><stop offset="0.1924" stop-color="#3c3c3c"/><stop offset="0.2542" stop-color="#343434"/><stop offset="0.3581" stop-color="#2b2b2b"/><stop offset="0.8048" stop-color="#111111"/><stop offset="0.9508" stop-color="#080808"/><stop offset="0.9874" stop-color="#080808"/></linearGradient>
<linearGradient id="g66" gradientUnits="userSpaceOnUse" x1="590" y1="0" x2="946" y2="0"><stop offset="0.01264" stop-color="#6f6f6f"/><stop offset="0.07725" stop-color="#6b6b6b"/><stop offset="0.08287" stop-color="#676767"/><stop offset="0.09691" stop-color="#5b5b5b"/><stop offset="0.1138" stop-color="#525252"/><stop offset="0.1362" stop-color="#494949"/><stop offset="0.1699" stop-color="#404040"/><stop offset="0.2177" stop-color="#383838"/><stop offset="0.2963" stop-color="#303030"/><stop offset="0.4508" stop-color="#262626"/><stop offset="0.7935" stop-color="#121212"/><stop offset="0.9508" stop-color="#080808"/><stop offset="0.9874" stop-color="#080808"/></linearGradient>
<linearGradient id="g67" gradientUnits="userSpaceOnUse" x1="590" y1="0" x2="946" y2="0"><stop offset="0.009831" stop-color="#6f6f6f"/><stop offset="0.07444" stop-color="#6c6c6c"/><stop offset="0.07725" stop-color="#6b6b6b"/><stop offset="0.08848" stop-color="#606060"/><stop offset="0.1025" stop-color="#575757"/><stop offset="0.1222" stop-color="#4d4d4d"/><stop offset="0.1503" stop-color="#444444"/><stop offset="0.1896" stop-color="#3c3c3c"/><stop offset="0.2514" stop-color="#343434"/><stop offset="0.3553" stop-color="#2b2b2b"/><stop offset="0.7992" stop-color="#111111"/><stop offset="0.9537" stop-color="#080808"/><stop offset="0.9902" stop-color="#080808"/></linearGradient>
<linearGradient id="g68" gradientUnits="userSpaceOnUse" x1="590" y1="0" x2="946" y2="0"><stop offset="0.009831" stop-color="#6f6f6f"/><stop offset="0.07444" stop-color="#6c6c6c"/><stop offset="0.09129" stop-color="#5d5d5d"/><stop offset="0.1081" stop-color="#535353"/><stop offset="0.1306" stop-color="#4a4a4a"/><stop offset="0.1615" stop-color="#414141"/><stop offset="0.2065" stop-color="#393939"/><stop offset="0.2795" stop-color="#313131"/><stop offset="0.4171" stop-color="#282828"/><stop offset="0.7823" stop-color="#121212"/><stop offset="0.9537" stop-color="#080808"/><stop offset="0.9902" stop-color="#070707"/></linearGradient>
<linearGradient id="g69" gradientUnits="userSpaceOnUse" x1="590" y1="0" x2="946" y2="0"><stop offset="0.007022" stop-color="#6f6f6f"/><stop offset="0.07163" stop-color="#6c6c6c"/><stop offset="0.07444" stop-color="#6b6b6b"/><stop offset="0.08567" stop-color="#616161"/><stop offset="0.09972" stop-color="#575757"/><stop offset="0.1194" stop-color="#4d4d4d"/><stop offset="0.1475" stop-color="#444444"/><stop offset="0.1868" stop-color="#3c3c3c"/><stop offset="0.2486" stop-color="#343434"/><stop offset="0.3525" stop-color="#2b2b2b"/><stop offset="0.7935" stop-color="#121212"/><stop offset="0.9565" stop-color="#080808"/><stop offset="0.993" stop-color="#070707"/></linearGradient>
<linearGradient id="g70" gradientUnits="userSpaceOnUse" x1="590" y1="0" x2="946" y2="0"><stop offset="0.007022" stop-color="#6f6f6f"/><stop offset="0.07163" stop-color="#6c6c6c"/><stop offset="0.08567" stop-color="#606060"/><stop offset="0.09972" stop-color="#565656"/><stop offset="0.1194" stop-color="#4d4d4d"/><stop offset="0.1475" stop-color="#444444"/><stop offset="0.1868" stop-color="#3c3c3c"/><stop offset="0.2486" stop-color="#343434"/><stop offset="0.3553" stop-color="#2b2b2b"/><stop offset="0.7879" stop-color="#121212"/><stop offset="0.9565" stop-color="#080808"/><stop offset="0.993" stop-color="#070707"/></linearGradient>
<linearGradient id="g71" gradientUnits="userSpaceOnUse" x1="590" y1="0" x2="946" y2="0"><stop offset="0.004213" stop-color="#6f6f6f"/><stop offset="0.06882" stop-color="#6c6c6c"/><stop offset="0.07163" stop-color="#6b6b6b"/><stop offset="0.08287" stop-color="#616161"/><stop offset="0.09691" stop-color="#575757"/><stop offset="0.1166" stop-color="#4e4e4e"/><stop offset="0.1447" stop-color="#444444"/><stop offset="0.184" stop-color="#3c3c3c"/><stop offset="0.2458" stop-color="#343434"/><stop offset="0.3497" stop-color="#2c2c2c"/><stop offset="0.7879" stop-color="#121212"/><stop offset="0.9565" stop-color="#080808"/><stop offset="0.9958" stop-color="#070707"/></linearGradient>
<linearGradient id="g72" gradientUnits="userSpaceOnUse" x1="590" y1="0" x2="946" y2="0"><stop offset="0.004213" stop-color="#707070"/><stop offset="0.06882" stop-color="#6d6d6d"/><stop offset="0.08567" stop-color="#5e5e5e"/><stop offset="0.1025" stop-color="#545454"/><stop offset="0.125" stop-color="#4a4a4a"/><stop offset="0.1559" stop-color="#414141"/><stop offset="0.2008" stop-color="#393939"/><stop offset="0.2711" stop-color="#313131"/><stop offset="0.4031" stop-color="#282828"/><stop offset="0.7739" stop-color="#131313"/><stop offset="0.9565" stop-color="#080808"/><stop offset="0.9958" stop-color="#070707"/></linearGradient>
<linearGradient id="g73" gradientUnits="userSpaceOnUse" x1="590" y1="0" x2="946" y2="0"><stop offset="0.004213" stop-color="#707070"/><stop offset="0.06601" stop-color="#6d6d6d"/><stop offset="0.06882" stop-color="#6c6c6c"/><stop offset="0.08006" stop-color="#616161"/><stop offset="0.0941" stop-color="#585858"/><stop offset="0.1138" stop-color="#4e4e4e"/><stop offset="0.1419" stop-color="#454545"/><stop offset="0.1812" stop-color="#3c3c3c"/><stop offset="0.2402" stop-color="#343434"/><stop offset="0.3413" stop-color="#2c2c2c"/><stop offset="0.7879" stop-color="#121212"/><stop offset="0.9593" stop-color="#070707"/><stop offset="0.9958" stop-color="#070707"/></linearGradient>
<linearGradient id="g74" gradientUnits="userSpaceOnUse" x1="590" y1="0" x2="946" y2="0"><stop offset="0.001404" stop-color="#707070"/><stop offset="0.0632" stop-color="#6d6d6d"/><stop offset="0.06601" stop-color="#6d6d6d"/><stop offset="0.06882" stop-color="#6b6b6b"/><stop offset="0.08006" stop-color="#616161"/><stop offset="0.0941" stop-color="#575757"/><stop offset="0.1138" stop-color="#4e4e4e"/><stop offset="0.1419" stop-color="#444444"/><stop offset="0.1812" stop-color="#3c3c3c"/><stop offset="0.243" stop-color="#343434"/><stop offset="0.3469" stop-color="#2c2c2c"/><stop offset="0.7823" stop-color="#121212"/><stop offset="0.9593" stop-color="#070707"/><stop offset="0.9986" stop-color="#070707"/></linearGradient>
<linearGradient id="g75" gradientUnits="userSpaceOnUse" x1="590" y1="0" x2="946" y2="0"><stop offset="0.001404" stop-color="#707070"/><stop offset="0.0632" stop-color="#6d6d6d"/><stop offset="0.06601" stop-color="#6d6d6d"/><stop offset="0.08006" stop-color="#606060"/><stop offset="0.0941" stop-color="#575757"/><stop offset="0.1138" stop-color="#4d4d4d"/><stop offset="0.1419" stop-color="#444444"/><stop offset="0.1812" stop-color="#3c3c3c"/><stop offset="0.243" stop-color="#343434"/><stop offset="0.3497" stop-color="#2b2b2b"/><stop offset="0.7795" stop-color="#131313"/><stop offset="0.9621" stop-color="#070707"/><stop offset="0.9986" stop-color="#070707"/></linearGradient>
<linearGradient id="g76" gradientUnits="userSpaceOnUse" x1="590" y1="0" x2="946" y2="0"><stop offset="0.001404" stop-color="#707070"/><stop offset="0.0632" stop-color="#6d6d6d"/><stop offset="0.06601" stop-color="#6c6c6c"/><stop offset="0.07725" stop-color="#626262"/><stop offset="0.09129" stop-color="#585858"/><stop offset="0.111" stop-color="#4e4e4e"/><stop offset="0.139" stop-color="#454545"/><stop offset="0.1784" stop-color="#3c3c3c"/><stop offset="0.2374" stop-color="#343434"/><stop offset="0.3385" stop-color="#2c2c2c"/><stop offset="0.7851" stop-color="#121212"/><stop offset="0.9621" stop-color="#070707"/><stop offset="0.9986" stop-color="#060606"/></linearGradient>
<linearGradient id="g77" gradientUnits="userSpaceOnUse" x1="590" y1="0" x2="946" y2="0"><stop offset="0.001404" stop-color="#707070"/><stop offset="0.0632" stop-color="#6d6d6d"/><stop offset="0.06601" stop-color="#6c6c6c"/><stop offset="0.07725" stop-color="#616161"/><stop offset="0.09129" stop-color="#575757"/><stop offset="0.111" stop-color="#4e4e4e"/><stop offset="0.139" stop-color="#454545"/><stop offset="0.1784" stop-color="#3c3c3c"/><stop offset="0.2402" stop-color="#343434"/><stop offset="0.3441" stop-color="#2c2c2c"/><stop offset="0.7795" stop-color="#131313"/><stop offset="0.9621" stop-color="#070707"/><stop offset="0.9986" stop-color="#060606"/></linearGradient>
<linearGradient id="g78" gradientUnits="userSpaceOnUse" x1="590" y1="0" x2="946" y2="0"><stop offset="-0.001404" stop-color="#707070"/><stop offset="0.06039" stop-color="#6e6e6e"/><stop offset="0.0632" stop-color="#6d6d6d"/><stop offset="0.07725" stop-color="#606060"/><stop offset="0.09129" stop-color="#575757"/><stop offset="0.111" stop-color="#4d4d4d"/><stop offset="0.139" stop-color="#444444"/><stop offset="0.1784" stop-color="#3c3c3c"/><stop offset="0.2402" stop-color="#343434"/><stop offset="0.3441" stop-color="#2c2c2c"/><stop offset="0.7795" stop-color="#131313"/><stop offset="0.9649" stop-color="#070707"/><stop offset="1.001" stop-color="#060606"/></linearGradient>
<linearGradient id="g79" gradientUnits="userSpaceOnUse" x1="590" y1="0" x2="946" y2="0"><stop offset="-0.001404" stop-color="#707070"/><stop offset="0.06039" stop-color="#6e6e6e"/><stop offset="0.0632" stop-color="#6d6d6d"/><stop offset="0.07444" stop-color="#626262"/><stop offset="0.08848" stop-color="#585858"/><stop offset="0.1081" stop-color="#4e4e4e"/><stop offset="0.1334" stop-color="#464646"/><stop offset="0.1699" stop-color="#3d3d3d"/><stop offset="0.2261" stop-color="#353535"/><stop offset="0.3188" stop-color="#2d2d2d"/><stop offset="0.7907" stop-color="#121212"/><stop offset="0.9649" stop-color="#070707"/><stop offset="1.001" stop-color="#060606"/></linearGradient>
<linearGradient id="g80" gradientUnits="userSpaceOnUse" x1="590" y1="0" x2="946" y2="0"><stop offset="-0.001404" stop-color="#707070"/><stop offset="0.06039" stop-color="#6e6e6e"/><stop offset="0.0632" stop-color="#6d6d6d"/><stop offset="0.07444" stop-color="#626262"/><stop offset="0.08848" stop-color="#585858"/><stop offset="0.1081" stop-color="#4e4e4e"/><stop offset="0.1362" stop-color="#454545"/><stop offset="0.1756" stop-color="#3c3c3c"/><stop offset="0.2346" stop-color="#353535"/><stop offset="0.3357" stop-color="#2c2c2c"/><stop offset="0.7795" stop-color="#131313"/><stop offset="0.9649" stop-color="#070707"/><stop offset="1.001" stop-color="#060606"/></linearGradient>
<linearGradient id="g81" gradientUnits="userSpaceOnUse" x1="590" y1="0" x2="946" y2="0"><stop offset="-0.001404" stop-color="#707070"/><stop offset="0.06039" stop-color="#6e6e6e"/><stop offset="0.0632" stop-color="#6c6c6c"/><stop offset="0.07444" stop-color="#616161"/><stop offset="0.08848" stop-color="#585858"/><stop offset="0.1081" stop-color="#4e4e4e"/><stop offset="0.1362" stop-color="#454545"/><stop offset="0.1756" stop-color="#3c3c3c"/><stop offset="0.2346" stop-color="#343434"/><stop offset="0.3357" stop-color="#2c2c2c"/><stop offset="0.7795" stop-color="#131313"/><stop offset="0.9649" stop-color="#070707"/><stop offset="1.001" stop-color="#060606"/></linearGradient>
<linearGradient id="g82" gradientUnits="userSpaceOnUse" x1="590" y1="0" x2="946" y2="0"><stop offset="-0.001404" stop-color="#707070"/><stop offset="0.06039" stop-color="#6e6e6e"/><stop offset="0.07725" stop-color="#5f5f5f"/><stop offset="0.0941" stop-color="#545454"/><stop offset="0.1166" stop-color="#4b4b4b"/><stop offset="0.1475" stop-color="#424242"/><stop offset="0.1924" stop-color="#3a3a3a"/><stop offset="0.2626" stop-color="#323232"/><stop offset="0.3947" stop-color="#292929"/><stop offset="0.7654" stop-color="#131313"/><stop offset="0.9649" stop-color="#070707"/><stop offset="1.001" stop-color="#060606"/></linearGradient>
<linearGradient id="g83" gradientUnits="userSpaceOnUse" x1="590" y1="0" x2="946" y2="0"><stop offset="-0.004213" stop-color="#707070"/><stop offset="0.05478" stop-color="#6e6e6e"/><stop offset="0.06039" stop-color="#6e6e6e"/><stop offset="0.07444" stop-color="#616161"/><stop offset="0.08848" stop-color="#575757"/><stop offset="0.1081" stop-color="#4e4e4e"/><stop offset="0.1362" stop-color="#444444"/><stop offset="0.1756" stop-color="#3c3c3c"/><stop offset="0.2374" stop-color="#343434"/><stop offset="0.3413" stop-color="#2c2c2c"/><stop offset="0.7739" stop-color="#131313"/><stop offset="0.9677" stop-color="#070707"/><stop offset="1.004" stop-color="#060606"/></linearGradient>
<linearGradient id="g84" gradientUnits="userSpaceOnUse" x1="590" y1="0" x2="946" y2="0"><stop offset="-0.004213" stop-color="#707070"/><stop offset="0.05478" stop-color="#6e6e6e"/><stop offset="0.06039" stop-color="#6e6e6e"/><stop offset="0.07163" stop-color="#636363"/><stop offset="0.08567" stop-color="#595959"/><stop offset="0.1053" stop-color="#4f4f4f"/><stop offset="0.1306" stop-color="#464646"/><stop offset="0.1671" stop-color="#3e3e3e"/><stop offset="0.2233" stop-color="#363636"/><stop offset="0.316" stop-color="#2e2e2e"/><stop offset="0.7851" stop-color="#121212"/><stop offset="0.9677" stop-color="#070707"/><stop offset="1.004" stop-color="#060606"/></linearGradient>
<linearGradient id="g85" gradientUnits="userSpaceOnUse" x1="590" y1="0" x2="946" y2="0"><stop offset="-0.004213" stop-color="#707070"/><stop offset="0.05478" stop-color="#6e6e6e"/><stop offset="0.06039" stop-color="#6e6e6e"/><stop offset="0.07163" stop-color="#626262"/><stop offset="0.08567" stop-color="#585858"/><stop offset="0.1053" stop-color="#4e4e4e"/><stop offset="0.1306" stop-color="#464646"/><stop offset="0.1671" stop-color="#3e3e3e"/><stop offset="0.2233" stop-color="#363636"/><stop offset="0.316" stop-color="#2e2e2e"/><stop offset="0.7851" stop-color="#121212"/><stop offset="0.9677" stop-color="#070707"/><stop offset="1.004" stop-color="#060606"/></linearGradient>
<linearGradient id="g86" gradientUnits="userSpaceOnUse" x1="590" y1="0" x2="946" y2="0"><stop offset="-0.004213" stop-color="#707070"/><stop offset="0.05478" stop-color="#6e6e6e"/><stop offset="0.06039" stop-color="#6d6d6d"/><stop offset="0.07163" stop-color="#626262"/><stop offset="0.08567" stop-color="#585858"/><stop offset="0.1053" stop-color="#4e4e4e"/><stop offset="0.1306" stop-color="#464646"/><stop offset="0.1671" stop-color="#3e3e3e"/><stop offset="0.2233" stop-color="#363636"/><stop offset="0.316" stop-color="#2d2d2d"/><stop offset="0.7851" stop-color="#121212"/><stop offset="0.9677" stop-color="#070707"/><stop offset="1.004" stop-color="#060606"/></linearGradient>
<linearGradient id="g87" gradientUnits="userSpaceOnUse" x1="590" y1="0" x2="946" y2="0"><stop offset="-0.004213" stop-color="#707070"/><stop offset="0.05478" stop-color="#6e6e6e"/><stop offset="0.06039" stop-color="#6d6d6d"/><stop offset="0.07163" stop-color="#626262"/><stop offset="0.08567" stop-color="#585858"/><stop offset="0.1053" stop-color="#4e4e4e"/><stop offset="0.1306" stop-color="#464646"/><stop offset="0.1671" stop-color="#3e3e3e"/><stop offset="0.2233" stop-color="#363636"/><stop offset="0.316" stop-color="#2d2d2d"/><stop offset="0.7851" stop-color="#121212"/><stop offset="0.9677" stop-color="#070707"/><stop offset="1.004" stop-color="#060606"/></linearGradient>
<linearGradient id="g88" gradientUnits="userSpaceOnUse" x1="590" y1="0" x2="946" y2="0"><stop offset="-0.004213" stop-color="#707070"/><stop offset="0.05478" stop-color="#6e6e6e"/><stop offset="0.06039" stop-color="#6d6d6d"/><stop offset="0.07163" stop-color="#626262"/><stop offset="0.08567" stop-color="#585858"/><stop offset="0.1053" stop-color="#4e4e4e"/><stop offset="0.1306" stop-color="#464646"/><stop offset="0.1671" stop-color="#3d3d3d"/><stop offset="0.2233" stop-color="#363636"/><stop offset="0.316" stop-color="#2d2d2d"/><stop offset="0.7851" stop-color="#121212"/><stop offset="0.9677" stop-color="#070707"/><stop offset="1.004" stop-color="#060606"/></linearGradient>
</defs>
<rect x="0" y="0" width="1024" height="22" fill="#fff"/>
<path d="M0 21V4Q0 0 4 0H1020Q1024 0 1024 4V21Z" fill="url(#tb)"/>
<rect x="0" y="21" width="1024" height="1" fill="#acacac"/>
<circle cx="14" cy="11" r="5.5" fill="url(#bt)" stroke="#bcbcbc" stroke-width="1.1"/>
<circle cx="34" cy="11" r="5.5" fill="url(#bt)" stroke="#bcbcbc" stroke-width="1.1"/>
<circle cx="54" cy="11" r="5.5" fill="url(#bt)" stroke="#bcbcbc" stroke-width="1.1"/>
<circle cx="14" cy="11" r="2" fill="#a6a6a6"/>
<text x="472" y="15.8" font-size="13.6" fill="#828282" textLength="78" lengthAdjust="spacingAndGlyphs">BRDF Viewer</text>
<g shape-rendering="crispEdges">
<rect x="512" y="22" width="1" height="512" fill="#000"/>
<rect x="1" y="277" width="511" height="1" fill="#000"/>
<rect x="25" y="32" width="472" height="231" fill="#cccccc"/>
<rect x="25" y="288" width="472" height="231" fill="#cccccc"/>
</g>
<g font-size="10.8" fill="#000" stroke="#000" stroke-width="0.12">
<text x="27" y="43">1/sr</text>
<text x="27" y="299">1/sr</text>
<text x="476.5" y="259.5">deg.</text>
<text x="476.5" y="515.5">deg.</text>
</g>
<g shape-rendering="crispEdges">
<rect x="182" y="32" width="1" height="231" fill="#00aa00"/>
<rect x="339" y="32" width="1" height="231" fill="#00aa00"/>
</g>
<polyline fill="none" stroke="#0000ff" stroke-width="1" shape-rendering="crispEdges" points="24.5,164.6 25.5,164.6 26.5,164.6 27.5,164.6 28.5,164.6 29.5,164.6 30.5,164.6 31.5,164.7 32.5,164.7 33.5,164.7 34.5,164.7 35.5,164.8 36.5,164.8 37.5,164.9 38.5,164.9 39.5,164.9 40.5,165.0 41.5,165.0 42.5,165.1 43.5,165.2 44.5,165.2 45.5,165.3 46.5,165.4 47.5,165.4 48.5,165.5 49.5,165.6 50.5,165.7 51.5,165.7 52.5,165.8 53.5,165.9 54.5,166.0 55.5,166.1 56.5,166.2 57.5,166.3 58.5,166.4 59.5,166.5 60.5,166.6 61.5,167.3 62.5,169.1 63.5,170.9 64.5,172.5 65.5,174.1 66.5,175.6 67.5,177.1 68.5,178.4 69.5,179.8 70.5,181.0 71.5,182.2 72.5,183.4 73.5,184.5 74.5,185.6 75.5,186.6 76.5,187.6 77.5,188.5 78.5,189.4 79.5,190.3 80.5,191.2 81.5,192.0 82.5,192.8 83.5,193.6 84.5,194.3 85.5,195.0 86.5,195.7 87.5,196.4 88.5,197.0 89.5,197.7 90.5,198.3 91.5,198.9 92.5,199.5 93.5,200.1 94.5,200.6 95.5,201.1 96.5,201.7 97.5,202.2 98.5,202.7 99.5,203.1 100.5,203.6 101.5,204.1 102.5,204.5 103.5,205.0 104.5,205.4 105.5,205.8 106.5,206.2 107.5,206.6 108.5,207.0 109.5,207.4 110.5,207.8 111.5,208.1 112.5,208.5 113.5,208.8 114.5,209.2 115.5,209.5 116.5,209.8 117.5,210.2 118.5,210.5 119.5,210.8 120.5,211.1 121.5,211.4 122.5,211.7 123.5,212.0 124.5,212.3 125.5,212.5 126.5,212.8 127.5,213.1 128.5,213.3 129.5,213.6 130.5,213.9 131.5,214.1 132.5,214.4 133.5,214.6 134.5,214.8 135.5,215.1 136.5,215.3 137.5,215.5 138.5,215.8 139.5,216.0 140.5,216.2 141.5,216.4 142.5,216.6 143.5,216.9 144.5,217.1 145.5,217.3 146.5,217.5 147.5,217.7 148.5,217.9 149.5,218.1 150.5,218.3 151.5,218.4 152.5,218.6 153.5,218.8 154.5,219.0 155.5,219.2 156.5,219.4 157.5,219.5 158.5,219.7 159.5,219.9 160.5,220.1 161.5,220.2 162.5,220.4 163.5,220.6 164.5,220.7 165.5,220.9 166.5,221.1 167.5,221.2 168.5,221.4 169.5,221.5 170.5,221.7 171.5,221.8 172.5,222.0 173.5,222.2 174.5,222.3 175.5,222.4 176.5,222.6 177.5,222.7 178.5,222.9 179.5,223.0 180.5,223.2 181.5,223.3 182.5,223.5 183.5,223.6 184.5,223.7 185.5,223.9 186.5,224.0 187.5,224.2 188.5,224.3 189.5,224.4 190.5,224.6 191.5,224.7 192.5,224.8 193.5,225.0 194.5,225.1 195.5,225.2 196.5,225.3 197.5,225.5 198.5,225.6 199.5,225.7 200.5,225.9 201.5,226.0 202.5,226.1 203.5,226.2 204.5,226.4 205.5,226.5 206.5,226.6 207.5,226.7 208.5,226.9 209.5,227.0 210.5,227.1 211.5,227.2 212.5,227.3 213.5,227.5 214.5,227.6 215.5,227.7 216.5,227.8 217.5,227.9 218.5,228.0 219.5,228.2 220.5,228.3 221.5,228.4 222.5,228.5 223.5,228.6 224.5,228.8 225.5,228.9 226.5,229.0 227.5,229.1 228.5,229.2 229.5,229.3 230.5,229.4 231.5,229.6 232.5,229.7 233.5,229.8 234.5,229.9 235.5,230.0 236.5,230.1 237.5,230.2 238.5,230.4 239.5,230.5 240.5,230.6 241.5,230.7 242.5,230.8 243.5,230.9 244.5,231.0 245.5,231.2 246.5,231.3 247.5,231.4 248.5,231.5 249.5,231.6 250.5,231.7 251.5,231.8 252.5,231.9 253.5,232.1 254.5,232.2 255.5,232.3 256.5,232.4 257.5,232.5 258.5,232.6 259.5,232.7 260.5,232.9 261.5,233.0 262.5,233.1 263.5,233.2 264.5,233.3 265.5,233.4 266.5,233.5 267.5,233.7 268.5,233.8 269.5,233.9 270.5,234.0 271.5,234.1 272.5,234.2 273.5,234.3 274.5,234.5 275.5,234.6 276.5,234.7 277.5,234.8 278.5,234.9 279.5,235.0 280.5,235.1 281.5,235.2 282.5,235.4 283.5,235.5 284.5,235.6 285.5,235.7 286.5,235.8 287.5,235.9 288.5,236.0 289.5,236.2 290.5,236.3 291.5,236.4 292.5,236.5 293.5,236.6 294.5,236.7 295.5,236.8 296.5,237.0 297.5,237.1 298.5,237.2 299.5,237.3 300.5,237.4 301.5,237.5 302.5,237.6 303.5,237.8 304.5,237.9 305.5,238.0 306.5,238.1 307.5,238.2 308.5,238.3 309.5,238.4 310.5,238.6 311.5,238.7 312.5,238.8 313.5,238.9 314.5,239.0 315.5,239.1 316.5,239.3 317.5,239.4 318.5,239.5 319.5,239.6 320.5,239.7 321.5,239.9 322.5,240.0 323.5,240.1 324.5,240.2 325.5,240.3 326.5,240.4 327.5,240.6 328.5,240.7 329.5,240.8 330.5,240.9 331.5,241.0 332.5,241.2 333.5,241.3 334.5,241.4 335.5,241.5 336.5,241.6 337.5,241.8 338.5,241.9 339.5,242.0 340.5,242.1 341.5,242.3 342.5,242.4 343.5,242.5 344.5,242.6 345.5,242.7 346.5,242.9 347.5,243.0 348.5,243.1 349.5,243.2 350.5,243.4 351.5,243.5 352.5,243.6 353.5,243.7 354.5,243.9 355.5,244.0 356.5,244.1 357.5,244.2 358.5,244.3 359.5,244.5 360.5,244.6 361.5,244.7 362.5,244.8 363.5,245.0 364.5,245.1 365.5,245.2 366.5,245.3 367.5,245.5 368.5,245.6 369.5,245.7 370.5,245.8 371.5,246.0 372.5,246.1 373.5,246.2 374.5,246.4 375.5,246.5 376.5,246.6 377.5,246.7 378.5,246.9 379.5,247.0 380.5,247.1 381.5,247.2 382.5,247.4 383.5,247.5 384.5,247.6 385.5,247.7 386.5,247.9 387.5,248.0 388.5,248.1 389.5,248.3 390.5,248.4 391.5,248.5 392.5,248.6 393.5,248.8 394.5,248.9 395.5,249.0 396.5,249.1 397.5,249.3 398.5,249.4 399.5,249.5 400.5,249.6 401.5,249.8 402.5,249.9 403.5,250.0 404.5,250.2 405.5,250.3 406.5,250.4 407.5,250.5 408.5,250.7 409.5,250.8 410.5,250.9 411.5,251.0 412.5,251.2 413.5,251.3 414.5,251.4 415.5,251.5 416.5,251.6 417.5,251.8 418.5,251.9 419.5,252.0 420.5,252.1 421.5,252.3 422.5,252.4 423.5,252.5 424.5,252.6 425.5,252.7 426.5,252.9 427.5,253.0 428.5,253.1 429.5,253.2 430.5,253.3 431.5,253.4 432.5,253.6 433.5,253.7 434.5,253.8 435.5,253.9 436.5,254.0 437.5,254.1 438.5,254.2 439.5,254.3 440.5,254.5 441.5,254.6 442.5,254.7 443.5,254.8 444.5,254.9 445.5,255.0 446.5,255.1 447.5,255.2 448.5,255.3 449.5,255.4 450.5,255.5 451.5,255.6 452.5,255.7 453.5,255.7 454.5,255.8 455.5,255.9 456.5,256.0 457.5,256.1 458.5,256.2 459.5,256.2 460.5,256.3 461.5,256.4 462.5,256.5 463.5,256.6 464.5,256.8 465.5,256.8 466.5,256.9 467.5,257.0 468.5,257.1 469.5,257.2 470.5,257.3 471.5,257.4 472.5,257.5 473.5,257.5 474.5,257.6 475.5,257.7 476.5,257.7 477.5,257.8 478.5,257.8 479.5,257.9 480.5,258.0 481.5,258.0 482.5,258.0 483.5,258.1 484.5,258.1 485.5,258.2 486.5,258.2 487.5,258.2 488.5,258.3 489.5,258.3 490.5,258.3 491.5,258.3 492.5,258.3 493.5,258.3 494.5,258.3 495.5,258.4 496.5,258.4"/>
<g shape-rendering="crispEdges">
<rect x="260" y="288" width="1" height="231" fill="#0000ff"/>
</g>
<polyline fill="none" stroke="#00aa00" stroke-width="1" shape-rendering="crispEdges" points="24.5,480.3 25.5,480.3 26.5,480.3 27.5,480.3 28.5,480.3 29.5,480.3 30.5,480.3 31.5,480.3 32.5,480.3 33.5,480.4 34.5,480.4 35.5,480.4 36.5,480.4 37.5,480.4 38.5,480.4 39.5,480.5 40.5,480.5 41.5,480.5 42.5,480.5 43.5,480.6 44.5,480.6 45.5,480.6 46.5,480.7 47.5,480.7 48.5,480.7 49.5,480.8 50.5,480.8 51.5,480.9 52.5,480.9 53.5,480.9 54.5,481.0 55.5,481.0 56.5,481.1 57.5,481.1 58.5,481.2 59.5,481.2 60.5,481.3 61.5,481.3 62.5,481.4 63.5,481.5 64.5,481.5 65.5,481.6 66.5,481.6 67.5,481.7 68.5,481.8 69.5,481.8 70.5,481.9 71.5,482.0 72.5,482.0 73.5,482.1 74.5,482.2 75.5,482.2 76.5,482.3 77.5,482.4 78.5,482.5 79.5,482.5 80.5,482.6 81.5,482.7 82.5,482.8 83.5,482.9 84.5,482.9 85.5,483.0 86.5,483.1 87.5,483.2 88.5,483.3 89.5,483.4 90.5,483.5 91.5,483.6 92.5,483.6 93.5,483.7 94.5,483.8 95.5,483.9 96.5,484.0 97.5,484.1 98.5,484.2 99.5,484.3 100.5,484.4 101.5,484.5 102.5,484.6 103.5,484.7 104.5,484.8 105.5,484.9 106.5,485.0 107.5,485.1 108.5,485.2 109.5,485.3 110.5,485.4 111.5,485.5 112.5,485.7 113.5,485.8 114.5,485.9 115.5,486.0 116.5,486.1 117.5,486.2 118.5,486.3 119.5,486.4 120.5,486.5 121.5,486.6 122.5,486.8 123.5,486.9 124.5,487.0 125.5,487.1 126.5,487.2 127.5,487.3 128.5,487.4 129.5,487.6 130.5,487.7 131.5,487.8 132.5,487.9 133.5,488.0 134.5,488.1 135.5,488.2 136.5,488.4 137.5,488.5 138.5,488.6 139.5,488.7 140.5,488.8 141.5,488.9 142.5,489.1 143.5,489.2 144.5,489.3 145.5,489.4 146.5,489.6 147.5,489.7 148.5,489.8 149.5,489.9 150.5,490.1 151.5,490.2 152.5,490.3 153.5,490.4 154.5,490.6 155.5,490.7 156.5,490.8 157.5,490.9 158.5,491.1 159.5,491.2 160.5,491.3 161.5,491.4 162.5,491.5 163.5,491.7 164.5,491.8 165.5,491.9 166.5,492.0 167.5,492.1 168.5,492.3 169.5,492.4 170.5,492.5 171.5,492.6 172.5,492.7 173.5,492.8 174.5,492.9 175.5,493.1 176.5,493.2 177.5,493.3 178.5,493.4 179.5,493.5 180.5,493.6 181.5,493.7 182.5,493.8 183.5,493.9 184.5,494.1 185.5,494.2 186.5,494.3 187.5,494.4 188.5,494.5 189.5,494.6 190.5,494.7 191.5,494.8 192.5,494.9 193.5,495.0 194.5,495.1 195.5,495.2 196.5,495.3 197.5,495.4 198.5,495.4 199.5,495.5 200.5,495.6 201.5,495.7 202.5,495.8 203.5,495.9 204.5,496.0 205.5,496.1 206.5,496.1 207.5,496.2 208.5,496.3 209.5,496.4 210.5,496.5 211.5,496.5 212.5,496.6 213.5,496.7 214.5,496.8 215.5,496.8 216.5,496.9 217.5,497.0 218.5,497.0 219.5,497.1 220.5,497.2 221.5,497.2 222.5,497.3 223.5,497.4 224.5,497.4 225.5,497.5 226.5,497.5 227.5,497.6 228.5,497.6 229.5,497.7 230.5,497.7 231.5,497.8 232.5,497.8 233.5,497.9 234.5,497.9 235.5,498.0 236.5,498.0 237.5,498.0 238.5,498.1 239.5,498.1 240.5,498.1 241.5,498.2 242.5,498.2 243.5,498.2 244.5,498.3 245.5,498.3 246.5,498.3 247.5,498.3 248.5,498.3 249.5,498.4 250.5,498.4 251.5,498.4 252.5,498.4 253.5,498.4 254.5,498.4 255.5,498.4 256.5,498.5 257.5,498.5 258.5,498.5 259.5,498.5 260.5,498.5 261.5,498.5 262.5,498.5 263.5,498.5 264.5,498.5 265.5,498.4 266.5,498.4 267.5,498.4 268.5,498.4 269.5,498.4 270.5,498.4 271.5,498.4 272.5,498.3 273.5,498.3 274.5,498.3 275.5,498.3 276.5,498.3 277.5,498.2 278.5,498.2 279.5,498.2 280.5,498.1 281.5,498.1 282.5,498.1 283.5,498.0 284.5,498.0 285.5,498.0 286.5,497.9 287.5,497.9 288.5,497.8 289.5,497.8 290.5,497.7 291.5,497.7 292.5,497.6 293.5,497.6 294.5,497.5 295.5,497.5 296.5,497.4 297.5,497.4 298.5,497.3 299.5,497.2 300.5,497.2 301.5,497.1 302.5,497.0 303.5,497.0 304.5,496.9 305.5,496.8 306.5,496.8 307.5,496.7 308.5,496.6 309.5,496.5 310.5,496.5 311.5,496.4 312.5,496.3 313.5,496.2 314.5,496.1 315.5,496.1 316.5,496.0 317.5,495.9 318.5,495.8 319.5,495.7 320.5,495.6 321.5,495.5 322.5,495.4 323.5,495.4 324.5,495.3 325.5,495.2 326.5,495.1 327.5,495.0 328.5,494.9 329.5,494.8 330.5,494.7 331.5,494.6 332.5,494.5 333.5,494.4 334.5,494.3 335.5,494.2 336.5,494.1 337.5,493.9 338.5,493.8 339.5,493.7 340.5,493.6 341.5,493.5 342.5,493.4 343.5,493.3 344.5,493.2 345.5,493.1 346.5,492.9 347.5,492.8 348.5,492.7 349.5,492.6 350.5,492.5 351.5,492.4 352.5,492.3 353.5,492.1 354.5,492.0 355.5,491.9 356.5,491.8 357.5,491.7 358.5,491.5 359.5,491.4 360.5,491.3 361.5,491.2 362.5,491.1 363.5,490.9 364.5,490.8 365.5,490.7 366.5,490.6 367.5,490.4 368.5,490.3 369.5,490.2 370.5,490.1 371.5,489.9 372.5,489.8 373.5,489.7 374.5,489.6 375.5,489.4 376.5,489.3 377.5,489.2 378.5,489.1 379.5,488.9 380.5,488.8 381.5,488.7 382.5,488.6 383.5,488.5 384.5,488.4 385.5,488.2 386.5,488.1 387.5,488.0 388.5,487.9 389.5,487.8 390.5,487.7 391.5,487.6 392.5,487.4 393.5,487.3 394.5,487.2 395.5,487.1 396.5,487.0 397.5,486.9 398.5,486.8 399.5,486.6 400.5,486.5 401.5,486.4 402.5,486.3 403.5,486.2 404.5,486.1 405.5,486.0 406.5,485.9 407.5,485.8 408.5,485.7 409.5,485.5 410.5,485.4 411.5,485.3 412.5,485.2 413.5,485.1 414.5,485.0 415.5,484.9 416.5,484.8 417.5,484.7 418.5,484.6 419.5,484.5 420.5,484.4 421.5,484.3 422.5,484.2 423.5,484.1 424.5,484.0 425.5,483.9 426.5,483.8 427.5,483.7 428.5,483.6 429.5,483.6 430.5,483.5 431.5,483.4 432.5,483.3 433.5,483.2 434.5,483.1 435.5,483.0 436.5,482.9 437.5,482.9 438.5,482.8 439.5,482.7 440.5,482.6 441.5,482.5 442.5,482.5 443.5,482.4 444.5,482.3 445.5,482.2 446.5,482.2 447.5,482.1 448.5,482.0 449.5,482.0 450.5,481.9 451.5,481.8 452.5,481.8 453.5,481.7 454.5,481.6 455.5,481.6 456.5,481.5 457.5,481.5 458.5,481.4 459.5,481.3 460.5,481.3 461.5,481.2 462.5,481.2 463.5,481.1 464.5,481.1 465.5,481.0 466.5,481.0 467.5,480.9 468.5,480.9 469.5,480.9 470.5,480.8 471.5,480.8 472.5,480.7 473.5,480.7 474.5,480.7 475.5,480.6 476.5,480.6 477.5,480.6 478.5,480.5 479.5,480.5 480.5,480.5 481.5,480.5 482.5,480.4 483.5,480.4 484.5,480.4 485.5,480.4 486.5,480.4 487.5,480.4 488.5,480.3 489.5,480.3 490.5,480.3 491.5,480.3 492.5,480.3 493.5,480.3 494.5,480.3 495.5,480.3 496.5,480.3"/>
<g shape-rendering="crispEdges">
<rect x="24" y="32" width="1" height="232" fill="#000"/>
<rect x="24" y="263" width="475" height="1" fill="#000"/>
<rect x="24" y="288" width="1" height="232" fill="#0000ff"/>
<rect x="24" y="519" width="475" height="1" fill="#000"/>
<rect x="23" y="240" width="4" height="1" fill="#000"/>
<rect x="23" y="217" width="4" height="1" fill="#000"/>
<rect x="23" y="194" width="4" height="1" fill="#000"/>
<rect x="23" y="171" width="4" height="1" fill="#000"/>
<rect x="23" y="148" width="4" height="1" fill="#000"/>
<rect x="23" y="124" width="4" height="1" fill="#000"/>
<rect x="23" y="101" width="4" height="1" fill="#000"/>
<rect x="23" y="78" width="4" height="1" fill="#000"/>
<rect x="23" y="55" width="4" height="1" fill="#000"/>
<rect x="23" y="32" width="4" height="1" fill="#000"/>
<rect x="23" y="496" width="4" height="1" fill="#000"/>
<rect x="23" y="473" width="4" height="1" fill="#000"/>
<rect x="23" y="450" width="4" height="1" fill="#000"/>
<rect x="23" y="427" width="4" height="1" fill="#000"/>
<rect x="23" y="404" width="4" height="1" fill="#000"/>
<rect x="23" y="380" width="4" height="1" fill="#000"/>
<rect x="23" y="357" width="4" height="1" fill="#000"/>
<rect x="23" y="334" width="4" height="1" fill="#000"/>
<rect x="23" y="311" width="4" height="1" fill="#000"/>
<rect x="23" y="288" width="4" height="1" fill="#000"/>
<rect x="24" y="262" width="1" height="2" fill="#000"/>
<rect x="51" y="262" width="1" height="2" fill="#000"/>
<rect x="77" y="262" width="1" height="2" fill="#000"/>
<rect x="103" y="262" width="1" height="2" fill="#000"/>
<rect x="129" y="262" width="1" height="2" fill="#000"/>
<rect x="156" y="262" width="1" height="2" fill="#000"/>
<rect x="182" y="262" width="1" height="2" fill="#000"/>
<rect x="208" y="262" width="1" height="2" fill="#000"/>
<rect x="234" y="262" width="1" height="2" fill="#000"/>
<rect x="260" y="262" width="1" height="2" fill="#000"/>
<rect x="287" y="262" width="1" height="2" fill="#000"/>
<rect x="313" y="262" width="1" height="2" fill="#000"/>
<rect x="339" y="262" width="1" height="2" fill="#000"/>
<rect x="365" y="262" width="1" height="2" fill="#000"/>
<rect x="392" y="262" width="1" height="2" fill="#000"/>
<rect x="418" y="262" width="1" height="2" fill="#000"/>
<rect x="444" y="262" width="1" height="2" fill="#000"/>
<rect x="470" y="262" width="1" height="2" fill="#000"/>
<rect x="496" y="262" width="1" height="2" fill="#000"/>
<rect x="24" y="518" width="1" height="2" fill="#000"/>
<rect x="64" y="518" width="1" height="2" fill="#000"/>
<rect x="103" y="518" width="1" height="2" fill="#000"/>
<rect x="142" y="518" width="1" height="2" fill="#000"/>
<rect x="182" y="518" width="1" height="2" fill="#000"/>
<rect x="221" y="518" width="1" height="2" fill="#000"/>
<rect x="260" y="518" width="1" height="2" fill="#000"/>
<rect x="300" y="518" width="1" height="2" fill="#000"/>
<rect x="339" y="518" width="1" height="2" fill="#000"/>
<rect x="378" y="518" width="1" height="2" fill="#000"/>
<rect x="418" y="518" width="1" height="2" fill="#000"/>
<rect x="457" y="518" width="1" height="2" fill="#000"/>
<rect x="496" y="518" width="1" height="2" fill="#000"/>
</g>
<g font-size="10.8" fill="#000" stroke="#000" stroke-width="0.12">
<text x="5" y="244">0.1</text>
<text x="5" y="221">0.2</text>
<text x="5" y="198">0.3</text>
<text x="5" y="175">0.4</text>
<text x="5" y="152">0.5</text>
<text x="5" y="128">0.6</text>
<text x="5" y="105">0.7</text>
<text x="5" y="82">0.8</text>
<text x="5" y="59">0.9</text>
<text x="5" y="36">1.0</text>
<text x="5" y="500">0.1</text>
<text x="5" y="477">0.2</text>
<text x="5" y="454">0.3</text>
<text x="5" y="431">0.4</text>
<text x="5" y="408">0.5</text>
<text x="5" y="384">0.6</text>
<text x="5" y="361">0.7</text>
<text x="5" y="338">0.8</text>
<text x="5" y="315">0.9</text>
<text x="5" y="292">1.1</text>
<text x="12.5" y="275">−90</text>
<text x="38.7" y="275">−80</text>
<text x="64.9" y="275">−70</text>
<text x="91.2" y="275">−60</text>
<text x="117.4" y="275">−50</text>
<text x="143.6" y="275">−40</text>
<text x="169.8" y="275">−30</text>
<text x="196.1" y="275">−20</text>
<text x="222.3" y="275">−10</text>
<text x="261.0" y="275" text-anchor="middle">0</text>
<text x="287.2" y="275" text-anchor="middle">10</text>
<text x="313.4" y="275" text-anchor="middle">20</text>
<text x="339.7" y="275" text-anchor="middle">30</text>
<text x="365.9" y="275" text-anchor="middle">40</text>
<text x="392.1" y="275" text-anchor="middle">50</text>
<text x="418.3" y="275" text-anchor="middle">60</text>
<text x="444.6" y="275" text-anchor="middle">70</text>
<text x="470.8" y="275" text-anchor="middle">80</text>
<text x="497.0" y="275" text-anchor="middle">90</text>
<text x="12.0" y="531">−180</text>
<text x="51.3" y="531">−150</text>
<text x="90.7" y="531">−120</text>
<text x="130.0" y="531">−90</text>
<text x="169.3" y="531">−60</text>
<text x="208.7" y="531">−30</text>
<text x="259.5" y="531" text-anchor="middle">0</text>
<text x="298.8" y="531" text-anchor="middle">30</text>
<text x="338.2" y="531" text-anchor="middle">60</text>
<text x="377.5" y="531" text-anchor="middle">90</text>
<text x="416.0" y="531" text-anchor="middle">120</text>
<text x="455.4" y="531" text-anchor="middle">150</text>
<text x="494.7" y="531" text-anchor="middle">180</text>
</g>
<g shape-rendering="crispEdges">
<rect x="581.5" y="31.5" width="372" height="20" fill="url(#cb)" stroke="#000" stroke-width="1"/>
</g>
<text x="581" y="62" font-size="11" fill="#000" stroke="#000" stroke-width="0.12" textLength="43" lengthAdjust="spacingAndGlyphs">min=0.00</text>
<text x="903" y="62" font-size="11" fill="#000" stroke="#000" stroke-width="0.12" textLength="45.5" lengthAdjust="spacingAndGlyphs">max=0.44</text>
<g shape-rendering="crispEdges">
<rect x="750" y="100" width="36" height="1" fill="url(#g0)"/>
<rect x="742" y="101" width="52" height="1" fill="url(#g0)"/>
<rect x="736" y="102" width="64" height="1" fill="url(#g1)"/>
<rect x="731" y="103" width="74" height="1" fill="url(#g1)"/>
<rect x="726" y="104" width="84" height="1" fill="url(#g2)"/>
<rect x="722" y="105" width="92" height="1" fill="url(#g2)"/>
<rect x="719" y="106" width="98" height="1" fill="url(#g3)"/>
<rect x="715" y="107" width="106" height="1" fill="url(#g3)"/>
<rect x="712" y="108" width="112" height="1" fill="url(#g4)"/>
<rect x="709" y="109" width="118" height="1" fill="url(#g4)"/>
<rect x="707" y="110" width="122" height="1" fill="url(#g5)"/>
<rect x="704" y="111" width="128" height="1" fill="url(#g5)"/>
<rect x="701" y="112" width="134" height="1" fill="url(#g6)"/>
<rect x="699" y="113" width="138" height="1" fill="url(#g6)"/>
<rect x="697" y="114" width="142" height="1" fill="url(#g7)"/>
<rect x="694" y="115" width="148" height="1" fill="url(#g7)"/>
<rect x="692" y="116" width="152" height="1" fill="url(#g8)"/>
<rect x="690" y="117" width="156" height="1" fill="url(#g8)"/>
<rect x="688" y="118" width="160" height="1" fill="url(#g9)"/>
<rect x="686" y="119" width="164" height="1" fill="url(#g9)"/>
<rect x="684" y="120" width="168" height="1" fill="url(#g10)"/>
<rect x="682" y="121" width="172" height="1" fill="url(#g10)"/>
<rect x="681" y="122" width="174" height="1" fill="url(#g11)"/>
<rect x="679" y="123" width="178" height="1" fill="url(#g11)"/>
<rect x="677" y="124" width="182" height="1" fill="url(#g12)"/>
<rect x="675" y="125" width="186" height="1" fill="url(#g12)"/>
<rect x="674" y="126" width="188" height="1" fill="url(#g13)"/>
<rect x="672" y="127" width="192" height="1" fill="url(#g13)"/>
<rect x="671" y="128" width="194" height="1" fill="url(#g14)"/>
<rect x="669" y="129" width="198" height="1" fill="url(#g14)"/>
<rect x="668" y="130" width="200" height="1" fill="url(#g15)"/>
<rect x="666" y="131" width="204" height="1" fill="url(#g15)"/>
<rect x="665" y="132" width="206" height="1" fill="url(#g16)"/>
<rect x="663" y="133" width="210" height="1" fill="url(#g16)"/>
<rect x="662" y="134" width="212" height="1" fill="url(#g17)"/>
<rect x="661" y="135" width="214" height="1" fill="url(#g17)"/>
<rect x="659" y="136" width="218" height="1" fill="url(#g18)"/>
<rect x="658" y="137" width="220" height="1" fill="url(#g18)"/>
<rect x="657" y="138" width="222" height="1" fill="url(#g19)"/>
<rect x="656" y="139" width="224" height="1" fill="url(#g19)"/>
<rect x="654" y="140" width="228" height="1" fill="url(#g20)"/>
<rect x="653" y="141" width="230" height="1" fill="url(#g20)"/>
<rect x="652" y="142" width="232" height="1" fill="url(#g21)"/>
<rect x="651" y="143" width="234" height="1" fill="url(#g21)"/>
<rect x="650" y="144" width="236" height="1" fill="url(#g22)"/>
<rect x="649" y="145" width="238" height="1" fill="url(#g22)"/>
<rect x="647" y="146" width="242" height="1" fill="url(#g23)"/>
<rect x="646" y="147" width="244" height="1" fill="url(#g23)"/>
<rect x="645" y="148" width="246" height="1" fill="url(#g24)"/>
<rect x="644" y="149" width="248" height="1" fill="url(#g24)"/>
<rect x="643" y="150" width="250" height="1" fill="url(#g25)"/>
<rect x="642" y="151" width="252" height="1" fill="url(#g25)"/>
<rect x="641" y="152" width="254" height="1" fill="url(#g26)"/>
<rect x="640" y="153" width="256" height="1" fill="url(#g26)"/>
<rect x="639" y="154" width="258" height="1" fill="url(#g27)"/>
<rect x="638" y="155" width="260" height="1" fill="url(#g27)"/>
<rect x="637" y="156" width="262" height="1" fill="url(#g28)"/>
<rect x="636" y="157" width="264" height="1" fill="url(#g28)"/>
<rect x="636" y="158" width="264" height="1" fill="url(#g29)"/>
<rect x="635" y="159" width="266" height="1" fill="url(#g29)"/>
<rect x="634" y="160" width="268" height="1" fill="url(#g30)"/>
<rect x="633" y="161" width="270" height="1" fill="url(#g30)"/>
<rect x="632" y="162" width="272" height="1" fill="url(#g31)"/>
<rect x="631" y="163" width="274" height="1" fill="url(#g31)"/>
<rect x="630" y="164" width="276" height="1" fill="url(#g32)"/>
<rect x="630" y="165" width="276" height="1" fill="url(#g32)"/>
<rect x="629" y="166" width="278" height="1" fill="url(#g33)"/>
<rect x="628" y="167" width="280" height="1" fill="url(#g33)"/>
<rect x="627" y="168" width="282" height="1" fill="url(#g34)"/>
<rect x="626" y="169" width="284" height="1" fill="url(#g34)"/>
<rect x="626" y="170" width="284" height="1" fill="url(#g35)"/>
<rect x="625" y="171" width="286" height="1" fill="url(#g35)"/>
<rect x="624" y="172" width="288" height="1" fill="url(#g36)"/>
<rect x="623" y="173" width="290" height="1" fill="url(#g36)"/>
<rect x="623" y="174" width="290" height="1" fill="url(#g37)"/>
<rect x="622" y="175" width="292" height="1" fill="url(#g37)"/>
<rect x="621" y="176" width="294" height="1" fill="url(#g38)"/>
<rect x="621" y="177" width="294" height="1" fill="url(#g38)"/>
<rect x="620" y="178" width="296" height="1" fill="url(#g39)"/>
<rect x="619" y="179" width="298" height="1" fill="url(#g39)"/>
<rect x="619" y="180" width="298" height="1" fill="url(#g40)"/>
<rect x="618" y="181" width="300" height="1" fill="url(#g40)"/>
<rect x="617" y="182" width="302" height="1" fill="url(#g41)"/>
<rect x="617" y="183" width="302" height="1" fill="url(#g41)"/>
<rect x="616" y="184" width="304" height="1" fill="url(#g42)"/>
<rect x="615" y="185" width="306" height="1" fill="url(#g42)"/>
<rect x="615" y="186" width="306" height="1" fill="url(#g43)"/>
<rect x="614" y="187" width="308" height="1" fill="url(#g43)"/>
<rect x="614" y="188" width="308" height="1" fill="url(#g44)"/>
<rect x="613" y="189" width="310" height="1" fill="url(#g44)"/>
<rect x="613" y="190" width="310" height="1" fill="url(#g45)"/>
<rect x="612" y="191" width="312" height="1" fill="url(#g45)"/>
<rect x="611" y="192" width="314" height="1" fill="url(#g46)"/>
<rect x="611" y="193" width="314" height="1" fill="url(#g46)"/>
<rect x="610" y="194" width="316" height="1" fill="url(#g47)"/>
<rect x="610" y="195" width="316" height="1" fill="url(#g47)"/>
<rect x="609" y="196" width="318" height="1" fill="url(#g48)"/>
<rect x="609" y="197" width="318" height="1" fill="url(#g48)"/>
<rect x="608" y="198" width="320" height="1" fill="url(#g49)"/>
<rect x="608" y="199" width="320" height="1" fill="url(#g49)"/>
<rect x="607" y="200" width="322" height="1" fill="url(#g50)"/>
<rect x="607" y="201" width="322" height="1" fill="url(#g50)"/>
<rect x="606" y="202" width="324" height="1" fill="url(#g51)"/>
<rect x="606" y="203" width="324" height="1" fill="url(#g51)"/>
<rect x="605" y="204" width="326" height="1" fill="url(#g52)"/>
<rect x="605" y="205" width="326" height="1" fill="url(#g52)"/>
<rect x="605" y="206" width="326" height="1" fill="url(#g53)"/>
<rect x="604" y="207" width="328" height="1" fill="url(#g53)"/>
<rect x="604" y="208" width="328" height="1" fill="url(#g54)"/>
<rect x="603" y="209" width="330" height="1" fill="url(#g54)"/>
<rect x="603" y="210" width="330" height="1" fill="url(#g55)"/>
<rect x="602" y="211" width="332" height="1" fill="url(#g55)"/>
<rect x="602" y="212" width="332" height="1" fill="url(#g56)"/>
<rect x="602" y="213" width="332" height="1" fill="url(#g56)"/>
<rect x="601" y="214" width="334" height="1" fill="url(#g57)"/>
<rect x="601" y="215" width="334" height="1" fill="url(#g57)"/>
<rect x="601" y="216" width="334" height="1" fill="url(#g58)"/>
<rect x="600" y="217" width="336" height="1" fill="url(#g58)"/>
<rect x="600" y="218" width="336" height="1" fill="url(#g59)"/>
<rect x="599" y="219" width="338" height="1" fill="url(#g59)"/>
<rect x="599" y="220" width="338" height="1" fill="url(#g60)"/>
<rect x="599" y="221" width="338" height="1" fill="url(#g60)"/>
<rect x="598" y="222" width="340" height="1" fill="url(#g61)"/>
<rect x="598" y="223" width="340" height="1" fill="url(#g61)"/>
<rect x="598" y="224" width="340" height="1" fill="url(#g62)"/>
<rect x="597" y="225" width="342" height="1" fill="url(#g62)"/>
<rect x="597" y="226" width="342" height="1" fill="url(#g63)"/>
<rect x="597" y="227" width="342" height="1" fill="url(#g63)"/>
<rect x="597" y="228" width="342" height="1" fill="url(#g64)"/>
<rect x="596" y="229" width="344" height="1" fill="url(#g64)"/>
<rect x="596" y="230" width="344" height="1" fill="url(#g65)"/>
<rect x="596" y="231" width="344" height="1" fill="url(#g65)"/>
<rect x="595" y="232" width="346" height="1" fill="url(#g66)"/>
<rect x="595" y="233" width="346" height="1" fill="url(#g66)"/>
<rect x="595" y="234" width="346" height="1" fill="url(#g67)"/>
<rect x="595" y="235" width="346" height="1" fill="url(#g67)"/>
<rect x="594" y="236" width="348" height="1" fill="url(#g68)"/>
<rect x="594" y="237" width="348" height="1" fill="url(#g68)"/>
<rect x="594" y="238" width="348" height="1" fill="url(#g69)"/>
<rect x="594" y="239" width="348" height="1" fill="url(#g69)"/>
<rect x="594" y="240" width="348" height="1" fill="url(#g70)"/>
<rect x="593" y="241" width="350" height="1" fill="url(#g70)"/>
<rect x="593" y="242" width="350" height="1" fill="url(#g71)"/>
<rect x="593" y="243" width="350" height="1" fill="url(#g71)"/>
<rect x="593" y="244" width="350" height="1" fill="url(#g72)"/>
<rect x="593" y="245" width="350" height="1" fill="url(#g72)"/>
<rect x="592" y="246" width="352" height="1" fill="url(#g73)"/>
<rect x="592" y="247" width="352" height="1" fill="url(#g73)"/>
<rect x="592" y="248" width="352" height="1" fill="url(#g74)"/>
<rect x="592" y="249" width="352" height="1" fill="url(#g74)"/>
<rect x="592" y="250" width="352" height="1" fill="url(#g75)"/>
<rect x="592" y="251" width="352" height="1" fill="url(#g75)"/>
<rect x="591" y="252" width="354" height="1" fill="url(#g76)"/>
<rect x="591" y="253" width="354" height="1" fill="url(#g76)"/>
<rect x="591" y="254" width="354" height="1" fill="url(#g77)"/>
<rect x="591" y="255" width="354" height="1" fill="url(#g77)"/>
<rect x="591" y="256" width="354" height="1" fill="url(#g78)"/>
<rect x="591" y="257" width="354" height="1" fill="url(#g78)"/>
<rect x="591" y="258" width="354" height="1" fill="url(#g79)"/>
<rect x="591" y="259" width="354" height="1" fill="url(#g79)"/>
<rect x="590" y="260" width="356" height="1" fill="url(#g80)"/>
<rect x="590" y="261" width="356" height="1" fill="url(#g80)"/>
<rect x="590" y="262" width="356" height="1" fill="url(#g81)"/>
<rect x="590" y="263" width="356" height="1" fill="url(#g81)"/>
<rect x="590" y="264" width="356" height="1" fill="url(#g82)"/>
<rect x="590" y="265" width="356" height="1" fill="url(#g82)"/>
<rect x="590" y="266" width="356" height="1" fill="url(#g83)"/>
<rect x="590" y="267" width="356" height="1" fill="url(#g83)"/>
<rect x="590" y="268" width="356" height="1" fill="url(#g84)"/>
<rect x="590" y="269" width="356" height="1" fill="url(#g84)"/>
<rect x="590" y="270" width="356" height="1" fill="url(#g85)"/>
<rect x="590" y="271" width="356" height="1" fill="url(#g85)"/>
<rect x="590" y="272" width="356" height="1" fill="url(#g86)"/>
<rect x="590" y="273" width="356" height="1" fill="url(#g86)"/>
<rect x="590" y="274" width="356" height="1" fill="url(#g87)"/>
<rect x="590" y="275" width="356" height="1" fill="url(#g87)"/>
<rect x="590" y="276" width="356" height="1" fill="url(#g88)"/>
<rect x="590" y="277" width="356" height="1" fill="url(#g88)"/>
<rect x="590" y="278" width="356" height="1" fill="url(#g88)"/>
<rect x="590" y="279" width="356" height="1" fill="url(#g88)"/>
<rect x="590" y="280" width="356" height="1" fill="url(#g87)"/>
<rect x="590" y="281" width="356" height="1" fill="url(#g87)"/>
<rect x="590" y="282" width="356" height="1" fill="url(#g86)"/>
<rect x="590" y="283" width="356" height="1" fill="url(#g86)"/>
<rect x="590" y="284" width="356" height="1" fill="url(#g85)"/>
<rect x="590" y="285" width="356" height="1" fill="url(#g85)"/>
<rect x="590" y="286" width="356" height="1" fill="url(#g84)"/>
<rect x="590" y="287" width="356" height="1" fill="url(#g84)"/>
<rect x="590" y="288" width="356" height="1" fill="url(#g83)"/>
<rect x="590" y="289" width="356" height="1" fill="url(#g83)"/>
<rect x="590" y="290" width="356" height="1" fill="url(#g82)"/>
<rect x="590" y="291" width="356" height="1" fill="url(#g82)"/>
<rect x="590" y="292" width="356" height="1" fill="url(#g81)"/>
<rect x="590" y="293" width="356" height="1" fill="url(#g81)"/>
<rect x="590" y="294" width="356" height="1" fill="url(#g80)"/>
<rect x="590" y="295" width="356" height="1" fill="url(#g80)"/>
<rect x="591" y="296" width="354" height="1" fill="url(#g79)"/>
<rect x="591" y="297" width="354" height="1" fill="url(#g79)"/>
<rect x="591" y="298" width="354" height="1" fill="url(#g78)"/>
<rect x="591" y="299" width="354" height="1" fill="url(#g78)"/>
<rect x="591" y="300" width="354" height="1" fill="url(#g77)"/>
<rect x="591" y="301" width="354" height="1" fill="url(#g77)"/>
<rect x="591" y="302" width="354" height="1" fill="url(#g76)"/>
<rect x="591" y="303" width="354" height="1" fill="url(#g76)"/>
<rect x="592" y="304" width="352" height="1" fill="url(#g75)"/>
<rect x="592" y="305" width="352" height="1" fill="url(#g75)"/>
<rect x="592" y="306" width="352" height="1" fill="url(#g74)"/>
<rect x="592" y="307" width="352" height="1" fill="url(#g74)"/>
<rect x="592" y="308" width="352" height="1" fill="url(#g73)"/>
<rect x="592" y="309" width="352" height="1" fill="url(#g73)"/>
<rect x="593" y="310" width="350" height="1" fill="url(#g72)"/>
<rect x="593" y="311" width="350" height="1" fill="url(#g72)"/>
<rect x="593" y="312" width="350" height="1" fill="url(#g71)"/>
<rect x="593" y="313" width="350" height="1" fill="url(#g71)"/>
<rect x="593" y="314" width="350" height="1" fill="url(#g70)"/>
<rect x="594" y="315" width="348" height="1" fill="url(#g70)"/>
<rect x="594" y="316" width="348" height="1" fill="url(#g69)"/>
<rect x="594" y="317" width="348" height="1" fill="url(#g69)"/>
<rect x="594" y="318" width="348" height="1" fill="url(#g68)"/>
<rect x="594" y="319" width="348" height="1" fill="url(#g68)"/>
<rect x="595" y="320" width="346" height="1" fill="url(#g67)"/>
<rect x="595" y="321" width="346" height="1" fill="url(#g67)"/>
<rect x="595" y="322" width="346" height="1" fill="url(#g66)"/>
<rect x="595" y="323" width="346" height="1" fill="url(#g66)"/>
<rect x="596" y="324" width="344" height="1" fill="url(#g65)"/>
<rect x="596" y="325" width="344" height="1" fill="url(#g65)"/>
<rect x="596" y="326" width="344" height="1" fill="url(#g64)"/>
<rect x="597" y="327" width="342" height="1" fill="url(#g64)"/>
<rect x="597" y="328" width="342" height="1" fill="url(#g63)"/>
<rect x="597" y="329" width="342" height="1" fill="url(#g63)"/>
<rect x="597" y="330" width="342" height="1" fill="url(#g62)"/>
<rect x="598" y="331" width="340" height="1" fill="url(#g62)"/>
<rect x="598" y="332" width="340" height="1" fill="url(#g61)"/>
<rect x="598" y="333" width="340" height="1" fill="url(#g61)"/>
<rect x="599" y="334" width="338" height="1" fill="url(#g60)"/>
<rect x="599" y="335" width="338" height="1" fill="url(#g60)"/>
<rect x="599" y="336" width="338" height="1" fill="url(#g59)"/>
<rect x="600" y="337" width="336" height="1" fill="url(#g59)"/>
<rect x="600" y="338" width="336" height="1" fill="url(#g58)"/>
<rect x="601" y="339" width="334" height="1" fill="url(#g58)"/>
<rect x="601" y="340" width="334" height="1" fill="url(#g57)"/>
<rect x="601" y="341" width="334" height="1" fill="url(#g57)"/>
<rect x="602" y="342" width="332" height="1" fill="url(#g56)"/>
<rect x="602" y="343" width="332" height="1" fill="url(#g56)"/>
<rect x="602" y="344" width="332" height="1" fill="url(#g55)"/>
<rect x="603" y="345" width="330" height="1" fill="url(#g55)"/>
<rect x="603" y="346" width="330" height="1" fill="url(#g54)"/>
<rect x="604" y="347" width="328" height="1" fill="url(#g54)"/>
<rect x="604" y="348" width="328" height="1" fill="url(#g53)"/>
<rect x="605" y="349" width="326" height="1" fill="url(#g53)"/>
<rect x="605" y="350" width="326" height="1" fill="url(#g52)"/>
<rect x="605" y="351" width="326" height="1" fill="url(#g52)"/>
<rect x="606" y="352" width="324" height="1" fill="url(#g51)"/>
<rect x="606" y="353" width="324" height="1" fill="url(#g51)"/>
<rect x="607" y="354" width="322" height="1" fill="url(#g50)"/>
<rect x="607" y="355" width="322" height="1" fill="url(#g50)"/>
<rect x="608" y="356" width="320" height="1" fill="url(#g49)"/>
<rect x="608" y="357" width="320" height="1" fill="url(#g49)"/>
<rect x="609" y="358" width="318" height="1" fill="url(#g48)"/>
<rect x="609" y="359" width="318" height="1" fill="url(#g48)"/>
<rect x="610" y="360" width="316" height="1" fill="url(#g47)"/>
<rect x="610" y="361" width="316" height="1" fill="url(#g47)"/>
<rect x="611" y="362" width="314" height="1" fill="url(#g46)"/>
<rect x="611" y="363" width="314" height="1" fill="url(#g46)"/>
<rect x="612" y="364" width="312" height="1" fill="url(#g45)"/>
<rect x="613" y="365" width="310" height="1" fill="url(#g45)"/>
<rect x="613" y="366" width="310" height="1" fill="url(#g44)"/>
<rect x="614" y="367" width="308" height="1" fill="url(#g44)"/>
<rect x="614" y="368" width="308" height="1" fill="url(#g43)"/>
<rect x="615" y="369" width="306" height="1" fill="url(#g43)"/>
<rect x="615" y="370" width="306" height="1" fill="url(#g42)"/>
<rect x="616" y="371" width="304" height="1" fill="url(#g42)"/>
<rect x="617" y="372" width="302" height="1" fill="url(#g41)"/>
<rect x="617" y="373" width="302" height="1" fill="url(#g41)"/>
<rect x="618" y="374" width="300" height="1" fill="url(#g40)"/>
<rect x="619" y="375" width="298" height="1" fill="url(#g40)"/>
<rect x="619" y="376" width="298" height="1" fill="url(#g39)"/>
<rect x="620" y="377" width="296" height="1" fill="url(#g39)"/>
<rect x="621" y="378" width="294" height="1" fill="url(#g38)"/>
<rect x="621" y="379" width="294" height="1" fill="url(#g38)"/>
<rect x="622" y="380" width="292" height="1" fill="url(#g37)"/>
<rect x="623" y="381" width="290" height="1" fill="url(#g37)"/>
<rect x="623" y="382" width="290" height="1" fill="url(#g36)"/>
<rect x="624" y="383" width="288" height="1" fill="url(#g36)"/>
<rect x="625" y="384" width="286" height="1" fill="url(#g35)"/>
<rect x="626" y="385" width="284" height="1" fill="url(#g35)"/>
<rect x="626" y="386" width="284" height="1" fill="url(#g34)"/>
<rect x="627" y="387" width="282" height="1" fill="url(#g34)"/>
<rect x="628" y="388" width="280" height="1" fill="url(#g33)"/>
<rect x="629" y="389" width="278" height="1" fill="url(#g33)"/>
<rect x="630" y="390" width="276" height="1" fill="url(#g32)"/>
<rect x="630" y="391" width="276" height="1" fill="url(#g32)"/>
<rect x="631" y="392" width="274" height="1" fill="url(#g31)"/>
<rect x="632" y="393" width="272" height="1" fill="url(#g31)"/>
<rect x="633" y="394" width="270" height="1" fill="url(#g30)"/>
<rect x="634" y="395" width="268" height="1" fill="url(#g30)"/>
<rect x="635" y="396" width="266" height="1" fill="url(#g29)"/>
<rect x="636" y="397" width="264" height="1" fill="url(#g29)"/>
<rect x="636" y="398" width="264" height="1" fill="url(#g28)"/>
<rect x="637" y="399" width="262" height="1" fill="url(#g28)"/>
<rect x="638" y="400" width="260" height="1" fill="url(#g27)"/>
<rect x="639" y="401" width="258" height="1" fill="url(#g27)"/>
<rect x="640" y="402" width="256" height="1" fill="url(#g26)"/>
<rect x="641" y="403" width="254" height="1" fill="url(#g26)"/>
<rect x="642" y="404" width="252" height="1" fill="url(#g25)"/>
<rect x="643" y="405" width="250" height="1" fill="url(#g25)"/>
<rect x="644" y="406" width="248" height="1" fill="url(#g24)"/>
<rect x="645" y="407" width="246" height="1" fill="url(#g24)"/>
<rect x="646" y="408" width="244" height="1" fill="url(#g23)"/>
<rect x="647" y="409" width="242" height="1" fill="url(#g23)"/>
<rect x="649" y="410" width="238" height="1" fill="url(#g22)"/>
<rect x="650" y="411" width="236" height="1" fill="url(#g22)"/>
<rect x="651" y="412" width="234" height="1" fill="url(#g21)"/>
<rect x="652" y="413" width="232" height="1" fill="url(#g21)"/>
<rect x="653" y="414" width="230" height="1" fill="url(#g20)"/>
<rect x="654" y="415" width="228" height="1" fill="url(#g20)"/>
<rect x="656" y="416" width="224" height="1" fill="url(#g19)"/>
<rect x="657" y="417" width="222" height="1" fill="url(#g19)"/>
<rect x="658" y="418" width="220" height="1" fill="url(#g18)"/>
<rect x="659" y="419" width="218" height="1" fill="url(#g18)"/>
<rect x="661" y="420" width="214" height="1" fill="url(#g17)"/>
<rect x="662" y="421" width="212" height="1" fill="url(#g17)"/>
<rect x="663" y="422" width="210" height="1" fill="url(#g16)"/>
<rect x="665" y="423" width="206" height="1" fill="url(#g16)"/>
<rect x="666" y="424" width="204" height="1" fill="url(#g15)"/>
<rect x="668" y="425" width="200" height="1" fill="url(#g15)"/>
<rect x="669" y="426" width="198" height="1" fill="url(#g14)"/>
<rect x="671" y="427" width="194" height="1" fill="url(#g14)"/>
<rect x="672" y="428" width="192" height="1" fill="url(#g13)"/>
<rect x="674" y="429" width="188" height="1" fill="url(#g13)"/>
<rect x="675" y="430" width="186" height="1" fill="url(#g12)"/>
<rect x="677" y="431" width="182" height="1" fill="url(#g12)"/>
<rect x="679" y="432" width="178" height="1" fill="url(#g11)"/>
<rect x="681" y="433" width="174" height="1" fill="url(#g11)"/>
<rect x="682" y="434" width="172" height="1" fill="url(#g10)"/>
<rect x="684" y="435" width="168" height="1" fill="url(#g10)"/>
<rect x="686" y="436" width="164" height="1" fill="url(#g9)"/>
<rect x="688" y="437" width="160" height="1" fill="url(#g9)"/>
<rect x="690" y="438" width="156" height="1" fill="url(#g8)"/>
<rect x="692" y="439" width="152" height="1" fill="url(#g8)"/>
<rect x="694" y="440" width="148" height="1" fill="url(#g7)"/>
<rect x="697" y="441" width="142" height="1" fill="url(#g7)"/>
<rect x="699" y="442" width="138" height="1" fill="url(#g6)"/>
<rect x="701" y="443" width="134" height="1" fill="url(#g6)"/>
<rect x="704" y="444" width="128" height="1" fill="url(#g5)"/>
<rect x="707" y="445" width="122" height="1" fill="url(#g5)"/>
<rect x="709" y="446" width="118" height="1" fill="url(#g4)"/>
<rect x="712" y="447" width="112" height="1" fill="url(#g4)"/>
<rect x="715" y="448" width="106" height="1" fill="url(#g3)"/>
<rect x="719" y="449" width="98" height="1" fill="url(#g3)"/>
<rect x="722" y="450" width="92" height="1" fill="url(#g2)"/>
<rect x="726" y="451" width="84" height="1" fill="url(#g2)"/>
<rect x="731" y="452" width="74" height="1" fill="url(#g1)"/>
<rect x="736" y="453" width="64" height="1" fill="url(#g1)"/>
<rect x="742" y="454" width="52" height="1" fill="url(#g0)"/>
<rect x="750" y="455" width="36" height="1" fill="url(#g0)"/>
</g>
<g fill="none" stroke-width="1" shape-rendering="crispEdges">
<circle cx="768" cy="278" r="43.5" stroke="#fff"/>
<circle cx="768" cy="278" r="65.5" stroke="#00aa00"/>
<circle cx="768" cy="278" r="96.5" stroke="#fff"/>
<circle cx="768" cy="278" r="127.5" stroke="#fff"/>
<rect x="767" y="100" width="1" height="356" fill="#fff" stroke="none"/>
<rect x="563" y="277" width="410" height="1" fill="#0000ff" stroke="none"/>
<rect x="608" y="275" width="5" height="2" fill="#ffff00" stroke="none"/>
<rect x="608" y="278" width="5" height="2" fill="#ffff00" stroke="none"/>
<rect x="923" y="275" width="5" height="2" fill="#ff0020" stroke="none"/>
<rect x="923" y="278" width="5" height="2" fill="#ff0020" stroke="none"/>
</g>
<g font-size="10.8" stroke-width="0.15">
<text x="769.5" y="288" fill="#fff" stroke="#fff">0</text>
<text x="769.5" y="308" fill="#00b400" stroke="#00b400">30</text>
<text x="769.5" y="332" fill="#fff" stroke="#fff">20</text>
<text x="769.5" y="385" fill="#fff" stroke="#fff">45</text>
<text x="769.5" y="416" fill="#fff" stroke="#fff">60</text>
<text x="769.5" y="454" fill="#fff" stroke="#fff">90</text>
<text x="977.5" y="278" fill="#0000ff" stroke="#0000ff">0</text>
</g>
<g font-size="11" fill="#4b0055" stroke="#4b0055" stroke-width="0.2" lengthAdjust="spacingAndGlyphs">
<text x="522.5" y="509" textLength="84.5" lengthAdjust="spacingAndGlyphs">Incident angle : 76</text>
<text x="522" y="524" textLength="82.5" lengthAdjust="spacingAndGlyphs">BRDF scale : 1.00</text>
<text y="524" xml:space="preserve"><tspan x="712.5" textLength="86.5" lengthAdjust="spacingAndGlyphs">OrenN : Kd=0.60   </tspan><tspan x="799.7" textLength="51.5" lengthAdjust="spacingAndGlyphs">sigma=1.00</tspan></text>
</g>
</svg>
</body></html>
